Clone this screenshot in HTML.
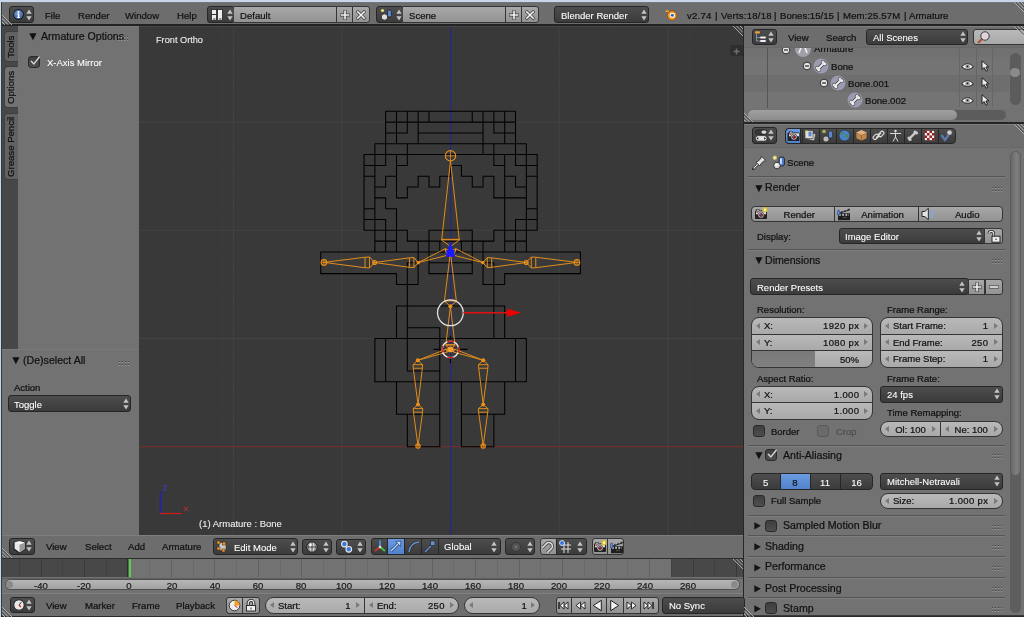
<!DOCTYPE html><html><head><meta charset="utf-8"><style>
*{margin:0;padding:0;box-sizing:border-box}
html,body{width:1024px;height:617px;overflow:hidden;background:#c7d6ea}
body{position:relative;font-family:"Liberation Sans",sans-serif}
.a{position:absolute}
.t{white-space:nowrap;line-height:1;will-change:transform;-webkit-text-stroke:0.22px}
</style></head><body><div class="a " style="left:1px;top:2px;width:1023px;height:615px;background:#3a3a3a"></div>
<div class="a " style="left:2px;top:2px;width:1022px;height:23px;background:#6d6d6d;border-top:1px solid #767676"></div>
<div class="a " style="left:2px;top:24.4px;width:1022px;height:1.5px;background:#222222"></div>
<div class="a " style="left:2px;top:26px;width:136.5px;height:509px;background:#727272"></div>
<div class="a " style="left:18px;top:26px;width:120.5px;height:1.2px;background:#7a7a7a"></div>
<div class="a " style="left:2px;top:26px;width:16px;height:323.5px;background:#474747"></div>
<div class="a " style="left:138.5px;top:26px;width:604.5px;height:509px;background:#393939"></div>
<div class="a " style="left:743px;top:26px;width:1px;height:591px;background:#262626"></div>
<div class="a " style="left:744px;top:26px;width:280px;height:98px;background:#727272"></div>
<div class="a " style="left:744px;top:26px;width:280px;height:21px;background:#6d6d6d"></div>
<div class="a " style="left:744px;top:124px;width:280px;height:491px;background:#727272"></div>
<div class="a " style="left:744px;top:124px;width:280px;height:22.5px;background:#6d6d6d"></div>
<div class="a " style="left:2px;top:535px;width:741px;height:23px;background:#6d6d6d"></div>
<div class="a " style="left:2px;top:558px;width:741px;height:36px;background:#727272"></div>
<div class="a " style="left:2px;top:594px;width:741px;height:21.5px;background:#6d6d6d"></div>
<div class="a " style="left:1px;top:615.5px;width:1023px;height:1.5px;background:#2a2a2a"></div>
<svg class="a" style="left:1.5px;top:14px" width="11" height="11"><path d="M0 2.3 L8.7 11 M0 5.8 L5.2 11 M0 9.3 L1.7 11" stroke="#4a4a4a" stroke-width="0.9"/><path d="M0 1 L10 11 M0 4.5 L6.5 11 M0 8 L3 11" stroke="#b4b4b4" stroke-width="0.9"/></svg>
<div class="a " style="left:9px;top:6px;width:25px;height:17px;background:linear-gradient(#4d4d4d,#3b3b3b);border:1px solid #262626;border-radius:3px"></div>
<svg class="a" style="left:13px;top:9px" width="11" height="11"><defs><radialGradient id="ig" cx="0.45" cy="0.4" r="0.6"><stop offset="0" stop-color="#7a9ad0"/><stop offset="1" stop-color="#3a5c9a"/></radialGradient></defs><circle cx="5.5" cy="5.5" r="5" fill="url(#ig)" stroke="#151515" stroke-width="1"/><circle cx="5.5" cy="3" r="1" fill="#fff"/><path d="M4.3 4.6 H6.3 V8.2 H7 V9 H4 V8.2 H4.8 V5.4 H4.3Z" fill="#fff"/></svg>
<svg class="a" style="left:25.5px;top:8.5px" width="6" height="12"><path d="M3 0.5 L5.7 4.8 L0.3 4.8Z M3 11.5 L5.7 7.2 L0.3 7.2Z" fill="#c4c4c4"/></svg>
<div class="a t " style="left:44.5px;top:11.20px;font-size:9.6px;color:#111;">File</div>
<div class="a t " style="left:77.5px;top:11.20px;font-size:9.6px;color:#111;">Render</div>
<div class="a t " style="left:125px;top:11.20px;font-size:9.6px;color:#111;">Window</div>
<div class="a t " style="left:176.5px;top:11.20px;font-size:9.6px;color:#111;">Help</div>
<div class="a " style="left:207px;top:6px;width:28px;height:17px;background:linear-gradient(#4d4d4d,#3b3b3b);border:1px solid #262626;border-radius:3px"></div>
<svg class="a" style="left:211px;top:9px" width="12" height="12"><rect x="0.5" y="0.5" width="5" height="11" fill="#eee" stroke="#222" stroke-width="0.8"/><rect x="6.5" y="0.5" width="5" height="11" fill="#eee" stroke="#222" stroke-width="0.8"/><path d="M1 5.5H5M2 10H4.5M8 10H10.5" stroke="#333"/></svg>
<svg class="a" style="left:226.5px;top:8.5px" width="6" height="12"><path d="M3 0.5 L5.7 4.8 L0.3 4.8Z M3 11.5 L5.7 7.2 L0.3 7.2Z" fill="#c4c4c4"/></svg>
<div class="a " style="left:234px;top:6px;width:103px;height:17px;background:linear-gradient(#a8a8a8,#929292);border:1px solid #353535;border-left:none;border-radius:0"></div>
<div class="a t " style="left:240px;top:11.30px;font-size:9.6px;color:#111;">Default</div>
<div class="a " style="left:336px;top:6px;width:17px;height:17px;background:linear-gradient(#a8a8a8,#929292);border:1px solid #353535;border-radius:0"></div>
<div class="a " style="left:352px;top:6px;width:18px;height:17px;background:linear-gradient(#a8a8a8,#929292);border:1px solid #353535;border-radius:0 3px 3px 0"></div>
<svg class="a" style="left:339px;top:9px" width="12" height="12"><path d="M6 1V11M1 6H11" stroke="#3a3a3a" stroke-width="3"/><path d="M6 1.6V10.4M1.6 6H10.4" stroke="#f4f4f4" stroke-width="1.6"/></svg>
<svg class="a" style="left:355px;top:9px" width="12" height="12"><path d="M1.8 1.8L10.2 10.2M10.2 1.8L1.8 10.2" stroke="#3a3a3a" stroke-width="3"/><path d="M2.2 2.2L9.8 9.8M9.8 2.2L2.2 9.8" stroke="#f4f4f4" stroke-width="1.6"/></svg>
<div class="a " style="left:376px;top:6px;width:28px;height:17px;background:linear-gradient(#4d4d4d,#3b3b3b);border:1px solid #262626;border-radius:3px"></div>
<svg class="a" style="left:380px;top:8px" width="13" height="13"><circle cx="2.5" cy="2.5" r="1.6" fill="#e8e070"/><circle cx="4.5" cy="9" r="3.2" fill="#ddd" stroke="#222" stroke-width="0.8"/><rect x="7.5" y="2" width="4" height="7" rx="1.5" fill="#5a86d0" stroke="#222" stroke-width="0.8"/></svg>
<svg class="a" style="left:395.5px;top:8.5px" width="6" height="12"><path d="M3 0.5 L5.7 4.8 L0.3 4.8Z M3 11.5 L5.7 7.2 L0.3 7.2Z" fill="#c4c4c4"/></svg>
<div class="a " style="left:403px;top:6px;width:103px;height:17px;background:linear-gradient(#a8a8a8,#929292);border:1px solid #353535;border-left:none;border-radius:0"></div>
<div class="a t " style="left:409px;top:11.30px;font-size:9.6px;color:#111;">Scene</div>
<div class="a " style="left:505px;top:6px;width:17px;height:17px;background:linear-gradient(#a8a8a8,#929292);border:1px solid #353535;border-radius:0"></div>
<div class="a " style="left:521px;top:6px;width:18px;height:17px;background:linear-gradient(#a8a8a8,#929292);border:1px solid #353535;border-radius:0 3px 3px 0"></div>
<svg class="a" style="left:508px;top:9px" width="12" height="12"><path d="M6 1V11M1 6H11" stroke="#3a3a3a" stroke-width="3"/><path d="M6 1.6V10.4M1.6 6H10.4" stroke="#f4f4f4" stroke-width="1.6"/></svg>
<svg class="a" style="left:524px;top:9px" width="12" height="12"><path d="M1.8 1.8L10.2 10.2M10.2 1.8L1.8 10.2" stroke="#3a3a3a" stroke-width="3"/><path d="M2.2 2.2L9.8 9.8M9.8 2.2L2.2 9.8" stroke="#f4f4f4" stroke-width="1.6"/></svg>
<div class="a " style="left:554px;top:6px;width:95px;height:17px;background:linear-gradient(#4d4d4d,#3b3b3b);border:1px solid #262626;border-radius:3px"></div>
<div class="a t " style="left:561px;top:10.55px;font-size:9.5px;color:#fff;-webkit-text-stroke:0.08px;">Blender Render</div>
<svg class="a" style="left:640.5px;top:8.5px" width="6" height="12"><path d="M3 0.5 L5.7 4.8 L0.3 4.8Z M3 11.5 L5.7 7.2 L0.3 7.2Z" fill="#c4c4c4"/></svg>
<svg class="a" style="left:664px;top:8px" width="14" height="13"><path d="M1 4 L6 4 L3 1.5 Z" fill="#f0a020"/><circle cx="8" cy="7.5" r="4.8" fill="#f09020" stroke="#7a4010" stroke-width="0.6"/><circle cx="8.3" cy="7.3" r="2.6" fill="#fff"/><circle cx="8.3" cy="7.3" r="1.5" fill="#2a5fa8"/></svg>
<div class="a t " style="left:687.3px;top:10.80px;font-size:9.6px;color:#111;letter-spacing:0.2px">v2.74</div>
<div class="a t " style="left:715.3px;top:10.80px;font-size:9.6px;color:#111;letter-spacing:0px">|</div>
<div class="a t " style="left:720.5px;top:10.80px;font-size:9.6px;color:#111;letter-spacing:0.2px">Verts:18/18</div>
<div class="a t " style="left:774.4px;top:10.80px;font-size:9.6px;color:#111;letter-spacing:0px">|</div>
<div class="a t " style="left:779.9px;top:10.80px;font-size:9.6px;color:#111;letter-spacing:0.0px">Bones:15/15</div>
<div class="a t " style="left:837.4px;top:10.80px;font-size:9.6px;color:#111;letter-spacing:0px">|</div>
<div class="a t " style="left:842.8px;top:10.80px;font-size:9.6px;color:#111;letter-spacing:0.14px">Mem:25.57M</div>
<div class="a t " style="left:903.5px;top:10.80px;font-size:9.6px;color:#111;letter-spacing:0px">|</div>
<div class="a t " style="left:909px;top:10.80px;font-size:9.6px;color:#111;letter-spacing:0px">Armature</div>
<svg class="a" style="left:1013px;top:2px" width="11" height="11"><path d="M2.3 0 L11 8.7 M5.8 0 L11 5.2 M9.3 0 L11 1.7" stroke="#4a4a4a" stroke-width="0.9"/><path d="M1 0 L11 10 M4.5 0 L11 6.5 M8 0 L11 3" stroke="#b4b4b4" stroke-width="0.9"/></svg>
<div class="a " style="left:3.8px;top:31px;width:14.5px;height:31px;background:#626262;border-radius:4px 0 0 4px;border:1px solid #3e3e3e;border-right:none"></div>
<div class="a t" style="left:6px;top:31px;width:10px;height:31px;display:flex;align-items:center;justify-content:center;font-size:9.6px;color:#111;writing-mode:vertical-rl;transform:rotate(180deg)">Tools</div>
<div class="a " style="left:3.8px;top:66px;width:14.5px;height:42px;background:#727272;border-radius:4px 0 0 4px;border:1px solid #3e3e3e;border-right:none"></div>
<div class="a t" style="left:6px;top:66px;width:10px;height:42px;display:flex;align-items:center;justify-content:center;font-size:9.6px;color:#111;writing-mode:vertical-rl;transform:rotate(180deg)">Options</div>
<div class="a " style="left:3.8px;top:113px;width:14.5px;height:67px;background:#626262;border-radius:4px 0 0 4px;border:1px solid #3e3e3e;border-right:none"></div>
<div class="a t" style="left:6px;top:113px;width:10px;height:67px;display:flex;align-items:center;justify-content:center;font-size:9.6px;color:#111;writing-mode:vertical-rl;transform:rotate(180deg)">Grease Pencil</div>
<svg class="a" style="left:29.0px;top:32.7px" width="8" height="8"><path d="M0.3 0.3 L7.5 0.3 L3.9 7.3Z" fill="#111"/></svg>
<div class="a t " style="left:40.5px;top:30.50px;font-size:10.6px;color:#111;">Armature Options</div>
<svg class="a" style="left:118px;top:35px" width="10" height="6"><g fill="#4a4a4a"><rect x="0" y="1" width="1.2" height="1"/><rect x="3" y="1" width="1.2" height="1"/><rect x="6" y="1" width="1.2" height="1"/><rect x="9" y="1" width="1" height="1"/><rect x="0" y="4" width="1.2" height="1"/><rect x="3" y="4" width="1.2" height="1"/><rect x="6" y="4" width="1.2" height="1"/><rect x="9" y="4" width="1" height="1"/></g><g fill="#9a9a9a"><rect x="0" y="2" width="1.2" height="1"/><rect x="3" y="2" width="1.2" height="1"/><rect x="6" y="2" width="1.2" height="1"/><rect x="9" y="2" width="1" height="1"/><rect x="0" y="5" width="1.2" height="1"/><rect x="3" y="5" width="1.2" height="1"/><rect x="6" y="5" width="1.2" height="1"/><rect x="9" y="5" width="1" height="1"/></g></svg>
<div class="a " style="left:28.3px;top:55.8px;width:12px;height:12px;background:linear-gradient(#3e3e3e,#4e4e4e);border:1px solid #2a2a2a;border-radius:3px"></div>
<svg class="a" style="left:29.3px;top:54.8px" width="12" height="12"><path d="M2.3 6.3 L4.9 8.9 L10.2 2.2" stroke="#d8d8d8" stroke-width="1.4" fill="none" stroke-linecap="round" stroke-linejoin="round"/></svg>
<div class="a t " style="left:47px;top:57.80px;font-size:9.5px;color:#fff;-webkit-text-stroke:0.08px;">X-Axis Mirror</div>
<div class="a " style="left:2px;top:349.3px;width:137px;height:1px;background:#7a7a7a"></div>
<div class="a " style="left:2px;top:350.3px;width:137px;height:184.7px;background:#727272"></div>
<svg class="a" style="left:12.0px;top:357.2px" width="8" height="8"><path d="M0.3 0.3 L7.5 0.3 L3.9 7.3Z" fill="#111"/></svg>
<div class="a t " style="left:22.5px;top:355.00px;font-size:10.6px;color:#111;">(De)select All</div>
<svg class="a" style="left:119px;top:360px" width="10" height="6"><g fill="#4a4a4a"><rect x="0" y="1" width="1.2" height="1"/><rect x="3" y="1" width="1.2" height="1"/><rect x="6" y="1" width="1.2" height="1"/><rect x="9" y="1" width="1" height="1"/><rect x="0" y="4" width="1.2" height="1"/><rect x="3" y="4" width="1.2" height="1"/><rect x="6" y="4" width="1.2" height="1"/><rect x="9" y="4" width="1" height="1"/></g><g fill="#9a9a9a"><rect x="0" y="2" width="1.2" height="1"/><rect x="3" y="2" width="1.2" height="1"/><rect x="6" y="2" width="1.2" height="1"/><rect x="9" y="2" width="1" height="1"/><rect x="0" y="5" width="1.2" height="1"/><rect x="3" y="5" width="1.2" height="1"/><rect x="6" y="5" width="1.2" height="1"/><rect x="9" y="5" width="1" height="1"/></g></svg>
<div class="a t " style="left:13.8px;top:382.80px;font-size:9.5px;color:#111;">Action</div>
<div class="a " style="left:8px;top:395px;width:123px;height:17px;background:linear-gradient(#4d4d4d,#3b3b3b);border:1px solid #262626;border-radius:3px"></div>
<div class="a t " style="left:14px;top:399.55px;font-size:9.5px;color:#fff;-webkit-text-stroke:0.08px;">Toggle</div>
<svg class="a" style="left:122.5px;top:397.5px" width="6" height="12"><path d="M3 0.5 L5.7 4.8 L0.3 4.8Z M3 11.5 L5.7 7.2 L0.3 7.2Z" fill="#c4c4c4"/></svg>
<svg class="a" style="left:139px;top:26px" width="604" height="509" viewBox="139 26 604 509">
<line x1="135.66" y1="26" x2="135.66" y2="535" stroke="#3c3c3c" stroke-width="1"/>
<line x1="146.52" y1="26" x2="146.52" y2="535" stroke="#3c3c3c" stroke-width="1"/>
<line x1="157.38" y1="26" x2="157.38" y2="535" stroke="#3c3c3c" stroke-width="1"/>
<line x1="168.24" y1="26" x2="168.24" y2="535" stroke="#3c3c3c" stroke-width="1"/>
<line x1="179.10" y1="26" x2="179.10" y2="535" stroke="#3c3c3c" stroke-width="1"/>
<line x1="189.96" y1="26" x2="189.96" y2="535" stroke="#3c3c3c" stroke-width="1"/>
<line x1="200.82" y1="26" x2="200.82" y2="535" stroke="#3c3c3c" stroke-width="1"/>
<line x1="211.68" y1="26" x2="211.68" y2="535" stroke="#3c3c3c" stroke-width="1"/>
<line x1="222.54" y1="26" x2="222.54" y2="535" stroke="#3c3c3c" stroke-width="1"/>
<line x1="233.40" y1="26" x2="233.40" y2="535" stroke="#434343" stroke-width="1"/>
<line x1="244.26" y1="26" x2="244.26" y2="535" stroke="#3c3c3c" stroke-width="1"/>
<line x1="255.12" y1="26" x2="255.12" y2="535" stroke="#3c3c3c" stroke-width="1"/>
<line x1="265.98" y1="26" x2="265.98" y2="535" stroke="#3c3c3c" stroke-width="1"/>
<line x1="276.84" y1="26" x2="276.84" y2="535" stroke="#3c3c3c" stroke-width="1"/>
<line x1="287.70" y1="26" x2="287.70" y2="535" stroke="#3c3c3c" stroke-width="1"/>
<line x1="298.56" y1="26" x2="298.56" y2="535" stroke="#3c3c3c" stroke-width="1"/>
<line x1="309.42" y1="26" x2="309.42" y2="535" stroke="#3c3c3c" stroke-width="1"/>
<line x1="320.28" y1="26" x2="320.28" y2="535" stroke="#3c3c3c" stroke-width="1"/>
<line x1="331.14" y1="26" x2="331.14" y2="535" stroke="#3c3c3c" stroke-width="1"/>
<line x1="342.00" y1="26" x2="342.00" y2="535" stroke="#434343" stroke-width="1"/>
<line x1="352.86" y1="26" x2="352.86" y2="535" stroke="#3c3c3c" stroke-width="1"/>
<line x1="363.72" y1="26" x2="363.72" y2="535" stroke="#3c3c3c" stroke-width="1"/>
<line x1="374.58" y1="26" x2="374.58" y2="535" stroke="#3c3c3c" stroke-width="1"/>
<line x1="385.44" y1="26" x2="385.44" y2="535" stroke="#3c3c3c" stroke-width="1"/>
<line x1="396.30" y1="26" x2="396.30" y2="535" stroke="#3c3c3c" stroke-width="1"/>
<line x1="407.16" y1="26" x2="407.16" y2="535" stroke="#3c3c3c" stroke-width="1"/>
<line x1="418.02" y1="26" x2="418.02" y2="535" stroke="#3c3c3c" stroke-width="1"/>
<line x1="428.88" y1="26" x2="428.88" y2="535" stroke="#3c3c3c" stroke-width="1"/>
<line x1="439.74" y1="26" x2="439.74" y2="535" stroke="#3c3c3c" stroke-width="1"/>
<line x1="450.60" y1="26" x2="450.60" y2="535" stroke="#434343" stroke-width="1"/>
<line x1="461.46" y1="26" x2="461.46" y2="535" stroke="#3c3c3c" stroke-width="1"/>
<line x1="472.32" y1="26" x2="472.32" y2="535" stroke="#3c3c3c" stroke-width="1"/>
<line x1="483.18" y1="26" x2="483.18" y2="535" stroke="#3c3c3c" stroke-width="1"/>
<line x1="494.04" y1="26" x2="494.04" y2="535" stroke="#3c3c3c" stroke-width="1"/>
<line x1="504.90" y1="26" x2="504.90" y2="535" stroke="#3c3c3c" stroke-width="1"/>
<line x1="515.76" y1="26" x2="515.76" y2="535" stroke="#3c3c3c" stroke-width="1"/>
<line x1="526.62" y1="26" x2="526.62" y2="535" stroke="#3c3c3c" stroke-width="1"/>
<line x1="537.48" y1="26" x2="537.48" y2="535" stroke="#3c3c3c" stroke-width="1"/>
<line x1="548.34" y1="26" x2="548.34" y2="535" stroke="#3c3c3c" stroke-width="1"/>
<line x1="559.20" y1="26" x2="559.20" y2="535" stroke="#434343" stroke-width="1"/>
<line x1="570.06" y1="26" x2="570.06" y2="535" stroke="#3c3c3c" stroke-width="1"/>
<line x1="580.92" y1="26" x2="580.92" y2="535" stroke="#3c3c3c" stroke-width="1"/>
<line x1="591.78" y1="26" x2="591.78" y2="535" stroke="#3c3c3c" stroke-width="1"/>
<line x1="602.64" y1="26" x2="602.64" y2="535" stroke="#3c3c3c" stroke-width="1"/>
<line x1="613.50" y1="26" x2="613.50" y2="535" stroke="#3c3c3c" stroke-width="1"/>
<line x1="624.36" y1="26" x2="624.36" y2="535" stroke="#3c3c3c" stroke-width="1"/>
<line x1="635.22" y1="26" x2="635.22" y2="535" stroke="#3c3c3c" stroke-width="1"/>
<line x1="646.08" y1="26" x2="646.08" y2="535" stroke="#3c3c3c" stroke-width="1"/>
<line x1="656.94" y1="26" x2="656.94" y2="535" stroke="#3c3c3c" stroke-width="1"/>
<line x1="667.80" y1="26" x2="667.80" y2="535" stroke="#434343" stroke-width="1"/>
<line x1="678.66" y1="26" x2="678.66" y2="535" stroke="#3c3c3c" stroke-width="1"/>
<line x1="689.52" y1="26" x2="689.52" y2="535" stroke="#3c3c3c" stroke-width="1"/>
<line x1="700.38" y1="26" x2="700.38" y2="535" stroke="#3c3c3c" stroke-width="1"/>
<line x1="711.24" y1="26" x2="711.24" y2="535" stroke="#3c3c3c" stroke-width="1"/>
<line x1="722.10" y1="26" x2="722.10" y2="535" stroke="#3c3c3c" stroke-width="1"/>
<line x1="732.96" y1="26" x2="732.96" y2="535" stroke="#3c3c3c" stroke-width="1"/>
<line x1="743.82" y1="26" x2="743.82" y2="535" stroke="#3c3c3c" stroke-width="1"/>
<line x1="754.68" y1="26" x2="754.68" y2="535" stroke="#3c3c3c" stroke-width="1"/>
<line x1="139" y1="24.72" x2="743" y2="24.72" stroke="#3b3b3b" stroke-width="1"/>
<line x1="139" y1="35.54" x2="743" y2="35.54" stroke="#3b3b3b" stroke-width="1"/>
<line x1="139" y1="46.36" x2="743" y2="46.36" stroke="#3b3b3b" stroke-width="1"/>
<line x1="139" y1="57.18" x2="743" y2="57.18" stroke="#3b3b3b" stroke-width="1"/>
<line x1="139" y1="68.00" x2="743" y2="68.00" stroke="#3b3b3b" stroke-width="1"/>
<line x1="139" y1="78.82" x2="743" y2="78.82" stroke="#3b3b3b" stroke-width="1"/>
<line x1="139" y1="89.64" x2="743" y2="89.64" stroke="#3b3b3b" stroke-width="1"/>
<line x1="139" y1="100.46" x2="743" y2="100.46" stroke="#3b3b3b" stroke-width="1"/>
<line x1="139" y1="111.28" x2="743" y2="111.28" stroke="#3b3b3b" stroke-width="1"/>
<line x1="139" y1="122.10" x2="743" y2="122.10" stroke="#434343" stroke-width="1"/>
<line x1="139" y1="132.92" x2="743" y2="132.92" stroke="#3b3b3b" stroke-width="1"/>
<line x1="139" y1="143.74" x2="743" y2="143.74" stroke="#3b3b3b" stroke-width="1"/>
<line x1="139" y1="154.56" x2="743" y2="154.56" stroke="#3b3b3b" stroke-width="1"/>
<line x1="139" y1="165.38" x2="743" y2="165.38" stroke="#3b3b3b" stroke-width="1"/>
<line x1="139" y1="176.20" x2="743" y2="176.20" stroke="#3b3b3b" stroke-width="1"/>
<line x1="139" y1="187.02" x2="743" y2="187.02" stroke="#3b3b3b" stroke-width="1"/>
<line x1="139" y1="197.84" x2="743" y2="197.84" stroke="#3b3b3b" stroke-width="1"/>
<line x1="139" y1="208.66" x2="743" y2="208.66" stroke="#3b3b3b" stroke-width="1"/>
<line x1="139" y1="219.48" x2="743" y2="219.48" stroke="#3b3b3b" stroke-width="1"/>
<line x1="139" y1="230.30" x2="743" y2="230.30" stroke="#434343" stroke-width="1"/>
<line x1="139" y1="241.12" x2="743" y2="241.12" stroke="#3b3b3b" stroke-width="1"/>
<line x1="139" y1="251.94" x2="743" y2="251.94" stroke="#3b3b3b" stroke-width="1"/>
<line x1="139" y1="262.76" x2="743" y2="262.76" stroke="#3b3b3b" stroke-width="1"/>
<line x1="139" y1="273.58" x2="743" y2="273.58" stroke="#3b3b3b" stroke-width="1"/>
<line x1="139" y1="284.40" x2="743" y2="284.40" stroke="#3b3b3b" stroke-width="1"/>
<line x1="139" y1="295.22" x2="743" y2="295.22" stroke="#3b3b3b" stroke-width="1"/>
<line x1="139" y1="306.04" x2="743" y2="306.04" stroke="#3b3b3b" stroke-width="1"/>
<line x1="139" y1="316.86" x2="743" y2="316.86" stroke="#3b3b3b" stroke-width="1"/>
<line x1="139" y1="327.68" x2="743" y2="327.68" stroke="#3b3b3b" stroke-width="1"/>
<line x1="139" y1="338.50" x2="743" y2="338.50" stroke="#434343" stroke-width="1"/>
<line x1="139" y1="349.32" x2="743" y2="349.32" stroke="#3b3b3b" stroke-width="1"/>
<line x1="139" y1="360.14" x2="743" y2="360.14" stroke="#3b3b3b" stroke-width="1"/>
<line x1="139" y1="370.96" x2="743" y2="370.96" stroke="#3b3b3b" stroke-width="1"/>
<line x1="139" y1="381.78" x2="743" y2="381.78" stroke="#3b3b3b" stroke-width="1"/>
<line x1="139" y1="392.60" x2="743" y2="392.60" stroke="#3b3b3b" stroke-width="1"/>
<line x1="139" y1="403.42" x2="743" y2="403.42" stroke="#3b3b3b" stroke-width="1"/>
<line x1="139" y1="414.24" x2="743" y2="414.24" stroke="#3b3b3b" stroke-width="1"/>
<line x1="139" y1="425.06" x2="743" y2="425.06" stroke="#3b3b3b" stroke-width="1"/>
<line x1="139" y1="435.88" x2="743" y2="435.88" stroke="#3b3b3b" stroke-width="1"/>
<line x1="139" y1="446.70" x2="743" y2="446.70" stroke="#434343" stroke-width="1"/>
<line x1="139" y1="457.52" x2="743" y2="457.52" stroke="#3b3b3b" stroke-width="1"/>
<line x1="139" y1="468.34" x2="743" y2="468.34" stroke="#3b3b3b" stroke-width="1"/>
<line x1="139" y1="479.16" x2="743" y2="479.16" stroke="#3b3b3b" stroke-width="1"/>
<line x1="139" y1="489.98" x2="743" y2="489.98" stroke="#3b3b3b" stroke-width="1"/>
<line x1="139" y1="500.80" x2="743" y2="500.80" stroke="#3b3b3b" stroke-width="1"/>
<line x1="139" y1="511.62" x2="743" y2="511.62" stroke="#3b3b3b" stroke-width="1"/>
<line x1="139" y1="522.44" x2="743" y2="522.44" stroke="#3b3b3b" stroke-width="1"/>
<line x1="139" y1="533.26" x2="743" y2="533.26" stroke="#3b3b3b" stroke-width="1"/>
<line x1="139" y1="544.08" x2="743" y2="544.08" stroke="#3b3b3b" stroke-width="1"/>
<line x1="139" y1="446.7" x2="743" y2="446.7" stroke="#7a2a2a" stroke-width="1"/>
<line x1="450.6" y1="26" x2="450.6" y2="535" stroke="#26268a" stroke-width="1.2"/>
<path d="M385.68 111.30H515.52M385.68 122.12H515.52M385.68 132.94H407.32M418.14 132.94H483.06M493.88 132.94H515.52M374.86 143.76H526.34M364.04 154.58H537.16M364.04 165.40H385.68M396.50 165.40H407.32M450.60 165.40H461.42M493.88 165.40H504.70M515.52 165.40H537.16M364.04 176.22H374.86M385.68 176.22H396.50M418.14 176.22H428.96M439.78 176.22H450.60M461.42 176.22H472.24M483.06 176.22H493.88M504.70 176.22H515.52M526.34 176.22H537.16M374.86 187.04H385.68M407.32 187.04H418.14M428.96 187.04H439.78M472.24 187.04H483.06M515.52 187.04H526.34M374.86 197.86H385.68M396.50 197.86H407.32M493.88 197.86H526.34M364.04 208.68H374.86M385.68 208.68H396.50M526.34 208.68H537.16M364.04 219.50H385.68M515.52 219.50H537.16M364.04 230.32H407.32M428.96 230.32H472.24M493.88 230.32H537.16M374.86 241.14H396.50M407.32 241.14H493.88M504.70 241.14H526.34M320.76 251.96H580.44M407.32 262.78H418.14M428.96 262.78H472.24M483.06 262.78H493.88M320.76 273.60H396.50M428.96 273.60H472.24M504.70 273.60H580.44M396.50 284.42H418.14M483.06 284.42H504.70M396.50 306.06H504.70M407.32 327.70H439.78M374.86 338.52H526.34M407.32 370.98H439.78M374.86 381.80H526.34M396.50 414.26H439.78M461.42 414.26H504.70M407.32 446.72H439.78M461.42 446.72H493.88M320.76 251.96V273.60M364.04 154.58V230.32M374.86 143.76V251.96M374.86 338.52V381.80M385.68 111.30V165.40M385.68 176.22V187.04M385.68 197.86V208.68M385.68 219.50V251.96M385.68 338.52V381.80M396.50 111.30V143.76M396.50 154.58V197.86M396.50 208.68V251.96M396.50 273.60V284.42M396.50 306.06V338.52M396.50 381.80V414.26M407.32 111.30V132.94M407.32 143.76V165.40M407.32 187.04V197.86M407.32 230.32V241.14M407.32 262.78V370.98M407.32 414.26V446.72M418.14 111.30V143.76M418.14 176.22V187.04M418.14 241.14V284.42M428.96 111.30V122.12M428.96 176.22V187.04M428.96 230.32V273.60M439.78 176.22V187.04M439.78 241.14V251.96M439.78 327.70V446.72M450.60 165.40V176.22M461.42 165.40V176.22M461.42 241.14V251.96M461.42 381.80V446.72M472.24 111.30V122.12M472.24 176.22V187.04M472.24 230.32V273.60M483.06 111.30V154.58M483.06 176.22V187.04M483.06 241.14V284.42M493.88 111.30V132.94M493.88 143.76V165.40M493.88 176.22V197.86M493.88 230.32V241.14M493.88 262.78V338.52M493.88 414.26V446.72M504.70 111.30V143.76M504.70 154.58V251.96M504.70 273.60V284.42M504.70 306.06V338.52M504.70 381.80V414.26M515.52 111.30V165.40M515.52 176.22V187.04M515.52 219.50V251.96M515.52 338.52V381.80M526.34 143.76V251.96M526.34 338.52V381.80M537.16 154.58V230.32M580.44 251.96V273.60" stroke="#000000" stroke-width="1.05" fill="none" stroke-linecap="square"/><path d="M450.50 246.50L459.70 239.82L459.24 239.32L450.50 160.80L441.76 239.32L441.30 239.82Z M459.70 239.82L441.30 239.82 M459.24 239.32L441.76 239.32" stroke="#e8901a" stroke-width="0.95" fill="none" stroke-linejoin="round"/><path d="M449.50 250.80L445.11 248.61L444.89 248.89L418.30 262.60L447.31 255.28L447.65 255.35Z M445.11 248.61L447.65 255.35 M444.89 248.89L447.31 255.28" stroke="#e8901a" stroke-width="0.95" fill="none" stroke-linejoin="round"/><path d="M418.30 262.60L413.94 257.59L409.44 257.83L374.60 262.50L409.42 267.33L413.92 267.59Z M413.94 257.59L413.92 267.59 M409.44 257.83L409.42 267.33" stroke="#e8901a" stroke-width="0.95" fill="none" stroke-linejoin="round"/><path d="M374.60 262.50L369.54 256.99L365.04 257.26L323.90 262.40L365.02 267.71L369.52 267.99Z M369.54 256.99L369.52 267.99 M365.04 257.26L365.02 267.71" stroke="#e8901a" stroke-width="0.95" fill="none" stroke-linejoin="round"/><path d="M451.50 250.80L453.37 255.35L453.72 255.29L482.90 262.60L456.12 248.88L455.91 248.61Z M453.37 255.35L455.91 248.61 M453.72 255.29L456.12 248.88" stroke="#e8901a" stroke-width="0.95" fill="none" stroke-linejoin="round"/><path d="M482.90 262.60L487.24 267.59L491.74 267.33L526.20 262.50L491.72 257.83L487.22 257.59Z M487.24 267.59L487.22 257.59 M491.74 267.33L491.72 257.83" stroke="#e8901a" stroke-width="0.95" fill="none" stroke-linejoin="round"/><path d="M526.20 262.50L531.29 267.99L535.79 267.71L577.00 262.40L535.77 257.26L531.27 256.99Z M531.29 267.99L531.27 256.99 M535.79 267.71L535.77 257.26" stroke="#e8901a" stroke-width="0.95" fill="none" stroke-linejoin="round"/><path d="M450.40 306.30L456.60 300.92L456.29 300.42L450.40 252.50L444.51 300.42L444.20 300.92Z M456.60 300.92L444.20 300.92 M456.29 300.42L444.51 300.42" stroke="#e8901a" stroke-width="0.95" fill="none" stroke-linejoin="round"/><path d="M450.40 349.40L455.20 345.09L454.96 344.59L450.40 306.30L445.84 344.59L445.60 345.09Z M455.20 345.09L445.60 345.09 M454.96 344.59L445.84 344.59" stroke="#e8901a" stroke-width="0.95" fill="none" stroke-linejoin="round"/><path d="M450.40 349.40L446.63 348.97L446.37 349.14L417.80 360.30L447.34 352.03L447.65 352.01Z M446.63 348.97L447.65 352.01 M446.37 349.14L447.34 352.03" stroke="#e8901a" stroke-width="0.95" fill="none" stroke-linejoin="round"/><path d="M417.80 360.30L413.02 364.74L413.28 368.24L418.00 404.50L422.40 368.20L422.62 364.70Z M413.02 364.74L422.62 364.70 M413.28 368.24L422.40 368.20" stroke="#e8901a" stroke-width="0.95" fill="none" stroke-linejoin="round"/><path d="M418.00 404.50L413.20 408.65L413.44 412.15L418.00 446.00L422.56 412.15L422.80 408.65Z M413.20 408.65L422.80 408.65 M413.44 412.15L422.56 412.15" stroke="#e8901a" stroke-width="0.95" fill="none" stroke-linejoin="round"/><path d="M450.40 349.40L453.19 352.01L453.50 352.03L483.30 360.30L454.45 349.14L454.19 348.97Z M453.19 352.01L454.19 348.97 M453.50 352.03L454.45 349.14" stroke="#e8901a" stroke-width="0.95" fill="none" stroke-linejoin="round"/><path d="M483.30 360.30L478.49 364.71L478.72 368.21L483.20 404.50L487.84 368.23L488.09 364.73Z M478.49 364.71L488.09 364.73 M478.72 368.21L487.84 368.23" stroke="#e8901a" stroke-width="0.95" fill="none" stroke-linejoin="round"/><path d="M483.20 404.50L478.40 408.65L478.64 412.15L483.20 446.00L487.76 412.15L488.00 408.65Z M478.40 408.65L488.00 408.65 M478.64 412.15L487.76 412.15" stroke="#e8901a" stroke-width="0.95" fill="none" stroke-linejoin="round"/><circle cx="450.5" cy="155.8" r="5.2" stroke="#e8901a" stroke-width="1.1" fill="none"/><path d="M445.3 155.8H455.7M450.5 150.60000000000002V161.0" stroke="#e8901a" stroke-width="0.8"/><circle cx="323.9" cy="262.4" r="2.8" stroke="#e8901a" stroke-width="1.1" fill="none"/><path d="M321.09999999999997 262.4H326.7M323.9 259.59999999999997V265.2" stroke="#e8901a" stroke-width="0.8"/><circle cx="577.0" cy="262.4" r="2.8" stroke="#e8901a" stroke-width="1.1" fill="none"/><path d="M574.2 262.4H579.8M577.0 259.59999999999997V265.2" stroke="#e8901a" stroke-width="0.8"/><circle cx="418" cy="446" r="2.2" stroke="#e8901a" stroke-width="1.1" fill="none"/><path d="M415.8 446H420.2M418 443.8V448.2" stroke="#e8901a" stroke-width="0.8"/><circle cx="483.2" cy="446" r="2.2" stroke="#e8901a" stroke-width="1.1" fill="none"/><path d="M481.0 446H485.4M483.2 443.8V448.2" stroke="#e8901a" stroke-width="0.8"/><circle cx="374.6" cy="262.5" r="2.0" stroke="#e8901a" stroke-width="1.1" fill="none"/><path d="M372.6 262.5H376.6M374.6 260.5V264.5" stroke="#e8901a" stroke-width="0.8"/><circle cx="526.2" cy="262.5" r="2.0" stroke="#e8901a" stroke-width="1.1" fill="none"/><path d="M524.2 262.5H528.2M526.2 260.5V264.5" stroke="#e8901a" stroke-width="0.8"/><circle cx="418.3" cy="262.6" r="1.8" fill="#e8901a"/><circle cx="482.9" cy="262.6" r="1.8" fill="#e8901a"/><circle cx="417.8" cy="360.3" r="2" fill="#e8901a"/><circle cx="483.3" cy="360.3" r="2" fill="#e8901a"/><circle cx="418" cy="404.5" r="2" fill="#e8901a"/><circle cx="483.2" cy="404.5" r="2" fill="#e8901a"/><circle cx="450.4" cy="306.3" r="2" fill="#e8901a"/><path d="M450.4 241.5 L455 256.5 L445.8 256.5Z" fill="#1a1aff"/><rect x="446.5" y="250" width="8" height="6.5" fill="#1a1aff"/><circle cx="450.4" cy="312.8" r="12.9" stroke="#e0e0e0" stroke-width="1.3" fill="none"/><line x1="463.3" y1="312.8" x2="508" y2="312.8" stroke="#e01010" stroke-width="1.6"/><path d="M507 308.8 L521.5 312.8 L507 316.8Z" fill="#ee0000"/><path d="M433.5 349.4H442M459 349.4H467.5M450.4 336V341M450.4 358V363" stroke="#000" stroke-width="1.1"/><circle cx="450.4" cy="349.4" r="8.3" stroke="#f0f0f0" stroke-width="1.3" fill="none"/><circle cx="450.4" cy="349.4" r="8.3" stroke="#e01818" stroke-width="1.3" fill="none" stroke-dasharray="6.52 6.52" stroke-dashoffset="3.2"/><circle cx="450.4" cy="349.4" r="2.8" fill="#f5a030"/>
</svg>
<div class="a " style="left:138.5px;top:26px;width:604.5px;height:1.2px;background:#474747"></div>
<div class="a t " style="left:155.5px;top:35.80px;font-size:9.2px;color:#f0f0f0;-webkit-text-stroke:0.08px;">Front Ortho</div>
<div class="a t " style="left:198.5px;top:518.80px;font-size:9.5px;color:#f0f0f0;-webkit-text-stroke:0.08px;">(1) Armature : Bone</div>
<svg class="a" style="left:150px;top:480px" width="45" height="40"><line x1="10.5" y1="11.5" x2="10.5" y2="33.5" stroke="#2020c8" stroke-width="1.3"/><line x1="10" y1="33.5" x2="32" y2="33.5" stroke="#c81e1e" stroke-width="1.3"/><path d="M13.3 5.5H16.5L13.3 10H16.5" stroke="#3a3ad8" stroke-width="0.9" fill="none"/><path d="M33.8 26.5L38 31M38 26.5L33.8 31" stroke="#c83030" stroke-width="0.9"/></svg>
<svg class="a" style="left:732px;top:26px" width="11" height="11"><path d="M2.3 0 L11 8.7 M5.8 0 L11 5.2 M9.3 0 L11 1.7" stroke="#4a4a4a" stroke-width="0.9"/><path d="M1 0 L11 10 M4.5 0 L11 6.5 M8 0 L11 3" stroke="#b4b4b4" stroke-width="0.9"/></svg>
<div class="a " style="left:730.2px;top:45px;width:13px;height:11.3px;background:#2e2e2e;border-radius:3px 0 0 3px"></div>
<svg class="a" style="left:732.5px;top:47.5px" width="7" height="7"><path d="M3.5 0.5V6.5M0.5 3.5H6.5" stroke="#6e6e6e" stroke-width="1.5"/></svg>
<div class="a " style="left:2px;top:534.5px;width:741px;height:1px;background:#7e7e7e"></div>
<svg class="a" style="left:1.5px;top:547px" width="11" height="11"><path d="M0 2.3 L8.7 11 M0 5.8 L5.2 11 M0 9.3 L1.7 11" stroke="#4a4a4a" stroke-width="0.9"/><path d="M0 1 L10 11 M0 4.5 L6.5 11 M0 8 L3 11" stroke="#b4b4b4" stroke-width="0.9"/></svg>
<div class="a " style="left:9.3px;top:538px;width:25.5px;height:16.5px;background:linear-gradient(#4d4d4d,#3b3b3b);border:1px solid #262626;border-radius:3px"></div>
<svg class="a" style="left:12.5px;top:540px" width="13" height="14"><path d="M6.5 1 L12 2.6 L12 9 L6.5 13 L1 9 L1 2.6Z" fill="#e8e8e8" stroke="#1a1a1a" stroke-width="1.1"/><path d="M6.5 4.6 L12 2.6 L12 9 L6.5 13Z" fill="#9a9a9a"/><path d="M1 2.6 L6.5 4.6 L12 2.6 L6.5 1Z" fill="#f4f4f4"/></svg>
<svg class="a" style="left:26.299999999999997px;top:540.25px" width="6" height="12"><path d="M3 0.5 L5.7 4.8 L0.3 4.8Z M3 11.5 L5.7 7.2 L0.3 7.2Z" fill="#c4c4c4"/></svg>
<div class="a t " style="left:46.4px;top:542.30px;font-size:9.6px;color:#111;">View</div>
<div class="a t " style="left:84.6px;top:542.30px;font-size:9.6px;color:#111;">Select</div>
<div class="a t " style="left:128px;top:542.30px;font-size:9.6px;color:#111;">Add</div>
<div class="a t " style="left:162px;top:542.30px;font-size:9.6px;color:#111;">Armature</div>
<div class="a " style="left:213px;top:538px;width:85px;height:17px;background:linear-gradient(#4d4d4d,#3b3b3b);border:1px solid #262626;border-radius:3px"></div>
<svg class="a" style="left:216px;top:540px" width="13" height="13"><rect x="3" y="2.5" width="7" height="8" rx="1" fill="#c8c8c8" stroke="#333" stroke-width="0.6"/><g fill="#f09a30" stroke="#3a2000" stroke-width="0.5"><rect x="1" y="1" width="3" height="3"/><rect x="6.5" y="2" width="3" height="3"/><rect x="1" y="7" width="3" height="3"/><rect x="6" y="9" width="3" height="3"/></g></svg>
<div class="a t " style="left:233.5px;top:542.55px;font-size:9.5px;color:#fff;-webkit-text-stroke:0.08px;">Edit Mode</div>
<svg class="a" style="left:289.5px;top:540.5px" width="6" height="12"><path d="M3 0.5 L5.7 4.8 L0.3 4.8Z M3 11.5 L5.7 7.2 L0.3 7.2Z" fill="#c4c4c4"/></svg>
<div class="a " style="left:302.3px;top:538.5px;width:29.3px;height:16px;background:linear-gradient(#4d4d4d,#3b3b3b);border:1px solid #262626;border-radius:3px"></div>
<svg class="a" style="left:306px;top:540.5px" width="12" height="12"><circle cx="6" cy="6" r="5.2" fill="#d6d6d6" stroke="#151515" stroke-width="0.9"/><path d="M6 0.8V11.2M0.8 6H11.2" stroke="#333" stroke-width="0.9"/><path d="M3.3 1.5 Q1.8 6 3.3 10.5 M8.7 1.5 Q10.2 6 8.7 10.5" stroke="#444" stroke-width="0.8" fill="none"/><circle cx="4.5" cy="4" r="1.4" fill="#fff" opacity="0.8"/></svg>
<svg class="a" style="left:323.1px;top:540.5px" width="6" height="12"><path d="M3 0.5 L5.7 4.8 L0.3 4.8Z M3 11.5 L5.7 7.2 L0.3 7.2Z" fill="#c4c4c4"/></svg>
<div class="a " style="left:336px;top:538.5px;width:29.5px;height:16px;background:linear-gradient(#4d4d4d,#3b3b3b);border:1px solid #262626;border-radius:3px"></div>
<svg class="a" style="left:339.5px;top:539.5px" width="13" height="14"><circle cx="4.4" cy="4.1" r="2.8" fill="#3a78e0" stroke="#eaeaea" stroke-width="1.1"/><circle cx="8.8" cy="9.3" r="2.8" fill="#3a78e0" stroke="#eaeaea" stroke-width="1.1"/></svg>
<svg class="a" style="left:357.0px;top:540.5px" width="6" height="12"><path d="M3 0.5 L5.7 4.8 L0.3 4.8Z M3 11.5 L5.7 7.2 L0.3 7.2Z" fill="#c4c4c4"/></svg>
<div class="a " style="left:371px;top:538px;width:130px;height:17px;background:linear-gradient(#4d4d4d,#3b3b3b);border:1px solid #262626;border-radius:3px"></div>
<div class="a " style="left:387px;top:538px;width:17.5px;height:17px;background:linear-gradient(#6a9ae0,#5282cc);border:1px solid #262626"></div>
<div class="a " style="left:404px;top:538px;width:1px;height:17px;background:#262626"></div>
<div class="a " style="left:421px;top:538px;width:1px;height:17px;background:#262626"></div>
<div class="a " style="left:438px;top:538px;width:1px;height:17px;background:#262626"></div>
<svg class="a" style="left:373px;top:539px" width="14" height="15"><path d="M7 8 V1.5" stroke="#4a88e0" stroke-width="2"/><path d="M7 8 L2 12" stroke="#d03030" stroke-width="2"/><path d="M7 8 L12 12" stroke="#40c040" stroke-width="2"/><circle cx="7" cy="8" r="1.3" fill="#ddd"/></svg>
<svg class="a" style="left:389px;top:540px" width="14" height="13"><path d="M2 11 L11 2" stroke="#1e3a6a" stroke-width="2.6"/><path d="M2 11 L10 3" stroke="#bcd6ff" stroke-width="1.4"/><path d="M6.5 1.5 L12 1 L11.5 6.5Z" fill="#bcd6ff" stroke="#1e3a6a" stroke-width="0.7"/></svg>
<svg class="a" style="left:407px;top:540px" width="14" height="13"><path d="M2 12 Q3 3 12 2" stroke="#1e2a3a" stroke-width="2.6" fill="none"/><path d="M2 12 Q3 3 12 2" stroke="#6c90c8" stroke-width="1.4" fill="none"/></svg>
<svg class="a" style="left:423px;top:540px" width="14" height="13"><path d="M2 12 L8 6" stroke="#1e2a3a" stroke-width="2.6"/><path d="M2 12 L8 6" stroke="#6c90c8" stroke-width="1.4"/><rect x="7.5" y="1" width="4.5" height="4.5" fill="#6c90c8" stroke="#1e2a3a" stroke-width="0.7"/></svg>
<div class="a t " style="left:444px;top:542.30px;font-size:9.6px;color:#fff;-webkit-text-stroke:0.08px;">Global</div>
<svg class="a" style="left:491px;top:540.5px" width="6" height="12"><path d="M3 0.5 L5.7 4.8 L0.3 4.8Z M3 11.5 L5.7 7.2 L0.3 7.2Z" fill="#c4c4c4"/></svg>
<div class="a " style="left:505px;top:538px;width:30px;height:17px;background:linear-gradient(#4d4d4d,#3b3b3b);border:1px solid #262626;border-radius:3px"></div>
<svg class="a" style="left:510px;top:541px" width="12" height="12"><circle cx="6" cy="6" r="4.5" fill="#555" stroke="#333" stroke-width="0.8"/><circle cx="6" cy="6" r="2.2" fill="#6a6a6a" stroke="#444" stroke-width="0.6"/></svg>
<svg class="a" style="left:526.5px;top:540.5px" width="6" height="12"><path d="M3 0.5 L5.7 4.8 L0.3 4.8Z M3 11.5 L5.7 7.2 L0.3 7.2Z" fill="#c4c4c4"/></svg>
<div class="a " style="left:540px;top:538px;width:17px;height:17px;background:linear-gradient(#a8a8a8,#929292);border:1px solid #353535;border-radius:3px 0 0 3px"></div>
<svg class="a" style="left:542px;top:540px" width="13" height="13"><g transform="rotate(45 6.5 6.5)"><path d="M3 12 L3 6 A3.5 3.5 0 0 1 10 6 L10 12" stroke="#444" stroke-width="3.2" fill="none"/><path d="M3 12 L3 6 A3.5 3.5 0 0 1 10 6 L10 12" stroke="#d8d8d8" stroke-width="1.6" fill="none"/></g></svg>
<div class="a " style="left:556px;top:538px;width:31px;height:17px;background:linear-gradient(#4d4d4d,#3b3b3b);border:1px solid #262626;border-radius:0 3px 3px 0"></div>
<svg class="a" style="left:558px;top:539px" width="14" height="15"><path d="M3 6H13M3 10H13M6 3V14M10 3V14" stroke="#ddd" stroke-width="1"/><circle cx="4" cy="4" r="2.5" fill="#3a7ae0" stroke="#eee" stroke-width="0.8"/></svg>
<svg class="a" style="left:577px;top:540.5px" width="6" height="12"><path d="M3 0.5 L5.7 4.8 L0.3 4.8Z M3 11.5 L5.7 7.2 L0.3 7.2Z" fill="#c4c4c4"/></svg>
<div class="a " style="left:592px;top:538px;width:16px;height:17px;background:linear-gradient(#a8a8a8,#929292);border:1px solid #353535;border-radius:3px 0 0 3px"></div>
<div class="a " style="left:607px;top:538px;width:17px;height:17px;background:linear-gradient(#a8a8a8,#929292);border:1px solid #353535;border-radius:0 3px 3px 0"></div>
<svg class="a" style="left:593px;top:539.5px" width="15" height="14"><rect x="1" y="3.5" width="12" height="8.5" rx="1" fill="#222"/><rect x="2" y="4.3" width="10" height="3" fill="#dcdcdc"/><rect x="2.5" y="2.5" width="3" height="1.5" fill="#ccc" stroke="#222" stroke-width="0.5"/><rect x="2.5" y="5" width="1.5" height="1" fill="#e03030"/><circle cx="7" cy="8" r="3" fill="#e8e8e8" stroke="#222" stroke-width="0.6"/><circle cx="7" cy="8" r="2" fill="#5a3040"/><circle cx="7.5" cy="8.5" r="1.1" fill="#b02020"/><circle cx="6.3" cy="7.3" r="0.6" fill="#6080c0"/><circle cx="11" cy="2.7" r="2.6" fill="#d8c030"/><circle cx="11" cy="2.7" r="1.2" fill="#fff8c0"/></svg>
<svg class="a" style="left:609.5px;top:539.5px" width="14" height="14"><rect x="1" y="6.2" width="12" height="7" fill="#1e1e1e"/><path d="M2 7.3H12M2 8.3H12" stroke="#eee" stroke-width="0.8" stroke-dasharray="1.8 1.4"/><path d="M1 5.2 L12.5 1.5 L13 3.3 L1.5 7Z" fill="#1e1e1e"/><path d="M2.5 5 L11.8 2.2" stroke="#eee" stroke-width="0.9" stroke-dasharray="1.8 1.4"/><rect x="0.3" y="3.2" width="2.6" height="5" rx="1.2" fill="#5a8ad8" stroke="#1e2e60" stroke-width="0.5"/><path d="M6 11 L8 10 L10 11" stroke="#777" stroke-width="0.6" fill="none"/></svg>
<div class="a " style="left:2px;top:557.8px;width:741px;height:1.4px;background:#2c2c2c"></div>
<div class="a " style="left:2px;top:559.2px;width:741px;height:18.3px;background:#727272"></div>
<div class="a " style="left:2px;top:559.2px;width:125.5px;height:18.3px;background:#484848"></div>
<div class="a " style="left:127px;top:558.8px;width:1px;height:18.7px;background:#2e2e2e"></div>
<div class="a " style="left:671px;top:558.8px;width:72px;height:18.7px;background:#484848"></div>
<div class="a " style="left:18.89px;top:559.2px;width:1px;height:18.3px;background:#414141"></div>
<div class="a " style="left:40.62px;top:559.2px;width:1px;height:18.3px;background:#393939"></div>
<div class="a " style="left:62.35px;top:559.2px;width:1px;height:18.3px;background:#414141"></div>
<div class="a " style="left:84.08px;top:559.2px;width:1px;height:18.3px;background:#393939"></div>
<div class="a " style="left:105.81px;top:559.2px;width:1px;height:18.3px;background:#414141"></div>
<div class="a " style="left:127.54px;top:559.2px;width:1px;height:18.3px;background:#616161"></div>
<div class="a " style="left:149.27px;top:559.2px;width:1px;height:18.3px;background:#6a6a6a"></div>
<div class="a " style="left:171.0px;top:559.2px;width:1px;height:18.3px;background:#616161"></div>
<div class="a " style="left:192.73px;top:559.2px;width:1px;height:18.3px;background:#6a6a6a"></div>
<div class="a " style="left:214.46px;top:559.2px;width:1px;height:18.3px;background:#616161"></div>
<div class="a " style="left:236.19px;top:559.2px;width:1px;height:18.3px;background:#6a6a6a"></div>
<div class="a " style="left:257.92px;top:559.2px;width:1px;height:18.3px;background:#616161"></div>
<div class="a " style="left:279.65px;top:559.2px;width:1px;height:18.3px;background:#6a6a6a"></div>
<div class="a " style="left:301.38px;top:559.2px;width:1px;height:18.3px;background:#616161"></div>
<div class="a " style="left:323.11px;top:559.2px;width:1px;height:18.3px;background:#6a6a6a"></div>
<div class="a " style="left:344.84px;top:559.2px;width:1px;height:18.3px;background:#616161"></div>
<div class="a " style="left:366.57px;top:559.2px;width:1px;height:18.3px;background:#6a6a6a"></div>
<div class="a " style="left:388.3px;top:559.2px;width:1px;height:18.3px;background:#616161"></div>
<div class="a " style="left:410.03px;top:559.2px;width:1px;height:18.3px;background:#6a6a6a"></div>
<div class="a " style="left:431.76px;top:559.2px;width:1px;height:18.3px;background:#616161"></div>
<div class="a " style="left:453.49px;top:559.2px;width:1px;height:18.3px;background:#6a6a6a"></div>
<div class="a " style="left:475.22px;top:559.2px;width:1px;height:18.3px;background:#616161"></div>
<div class="a " style="left:496.95px;top:559.2px;width:1px;height:18.3px;background:#6a6a6a"></div>
<div class="a " style="left:518.68px;top:559.2px;width:1px;height:18.3px;background:#616161"></div>
<div class="a " style="left:540.41px;top:559.2px;width:1px;height:18.3px;background:#6a6a6a"></div>
<div class="a " style="left:562.14px;top:559.2px;width:1px;height:18.3px;background:#616161"></div>
<div class="a " style="left:583.87px;top:559.2px;width:1px;height:18.3px;background:#6a6a6a"></div>
<div class="a " style="left:605.6px;top:559.2px;width:1px;height:18.3px;background:#616161"></div>
<div class="a " style="left:627.33px;top:559.2px;width:1px;height:18.3px;background:#6a6a6a"></div>
<div class="a " style="left:649.06px;top:559.2px;width:1px;height:18.3px;background:#616161"></div>
<div class="a " style="left:670.79px;top:559.2px;width:1px;height:18.3px;background:#414141"></div>
<div class="a " style="left:692.52px;top:559.2px;width:1px;height:18.3px;background:#393939"></div>
<div class="a " style="left:714.25px;top:559.2px;width:1px;height:18.3px;background:#414141"></div>
<div class="a " style="left:735.98px;top:559.2px;width:1px;height:18.3px;background:#393939"></div>
<div class="a " style="left:128.5px;top:559.2px;width:2.5px;height:18.3px;background:#58d048"></div>
<div class="a " style="left:2px;top:577.5px;width:741px;height:1.8px;background:#5e5e5e"></div>
<svg class="a" style="left:732px;top:559px" width="11" height="11"><path d="M2.3 0 L11 8.7 M5.8 0 L11 5.2 M9.3 0 L11 1.7" stroke="#4a4a4a" stroke-width="0.9"/><path d="M1 0 L11 10 M4.5 0 L11 6.5 M8 0 L11 3" stroke="#b4b4b4" stroke-width="0.9"/></svg>
<div class="a " style="left:4.5px;top:579.2px;width:735px;height:10.4px;background:linear-gradient(#b6b6b6,#a2a2a2);border:1px solid #4e4e4e;border-radius:5.5px"></div>
<div class="a" style="left:6px;top:581px;width:7px;height:7px;border-radius:50%;background:#8a8a8a"></div>
<div class="a" style="left:731px;top:581px;width:7px;height:7px;border-radius:50%;background:#8a8a8a"></div>
<div class="a t" style="left:25.60000000000001px;top:581.30px;width:30px;text-align:center;font-size:9.6px;color:#1a1a1a;">-40</div>
<div class="a t" style="left:68.60000000000001px;top:581.30px;width:30px;text-align:center;font-size:9.6px;color:#1a1a1a;">-20</div>
<div class="a t" style="left:113.9px;top:581.30px;width:30px;text-align:center;font-size:9.6px;color:#1a1a1a;">0</div>
<div class="a t" style="left:156.9px;top:581.30px;width:30px;text-align:center;font-size:9.6px;color:#1a1a1a;">20</div>
<div class="a t" style="left:199.9px;top:581.30px;width:30px;text-align:center;font-size:9.6px;color:#1a1a1a;">40</div>
<div class="a t" style="left:242.89999999999998px;top:581.30px;width:30px;text-align:center;font-size:9.6px;color:#1a1a1a;">60</div>
<div class="a t" style="left:285.9px;top:581.30px;width:30px;text-align:center;font-size:9.6px;color:#1a1a1a;">80</div>
<div class="a t" style="left:328.9px;top:581.30px;width:30px;text-align:center;font-size:9.6px;color:#1a1a1a;">100</div>
<div class="a t" style="left:371.9px;top:581.30px;width:30px;text-align:center;font-size:9.6px;color:#1a1a1a;">120</div>
<div class="a t" style="left:414.9px;top:581.30px;width:30px;text-align:center;font-size:9.6px;color:#1a1a1a;">140</div>
<div class="a t" style="left:457.9px;top:581.30px;width:30px;text-align:center;font-size:9.6px;color:#1a1a1a;">160</div>
<div class="a t" style="left:500.9px;top:581.30px;width:30px;text-align:center;font-size:9.6px;color:#1a1a1a;">180</div>
<div class="a t" style="left:543.9px;top:581.30px;width:30px;text-align:center;font-size:9.6px;color:#1a1a1a;">200</div>
<div class="a t" style="left:586.9px;top:581.30px;width:30px;text-align:center;font-size:9.6px;color:#1a1a1a;">220</div>
<div class="a t" style="left:629.9px;top:581.30px;width:30px;text-align:center;font-size:9.6px;color:#1a1a1a;">240</div>
<div class="a t" style="left:672.9px;top:581.30px;width:30px;text-align:center;font-size:9.6px;color:#1a1a1a;">260</div>
<div class="a " style="left:2px;top:593px;width:741px;height:1px;background:#808080"></div>
<svg class="a" style="left:1.5px;top:605.5px" width="11" height="11"><path d="M0 2.3 L8.7 11 M0 5.8 L5.2 11 M0 9.3 L1.7 11" stroke="#4a4a4a" stroke-width="0.9"/><path d="M0 1 L10 11 M0 4.5 L6.5 11 M0 8 L3 11" stroke="#b4b4b4" stroke-width="0.9"/></svg>
<div class="a " style="left:9.6px;top:596.5px;width:25px;height:16.5px;background:linear-gradient(#4d4d4d,#3b3b3b);border:1px solid #262626;border-radius:3px"></div>
<svg class="a" style="left:13px;top:599px" width="12" height="12"><circle cx="6" cy="6" r="5.2" fill="#e8e8e8" stroke="#222" stroke-width="0.9"/><path d="M6 6 L8.5 2.8" stroke="#333" stroke-width="1"/><path d="M6 6 L7.8 8" stroke="#d02020" stroke-width="1.2"/></svg>
<svg class="a" style="left:26.1px;top:598.75px" width="6" height="12"><path d="M3 0.5 L5.7 4.8 L0.3 4.8Z M3 11.5 L5.7 7.2 L0.3 7.2Z" fill="#c4c4c4"/></svg>
<div class="a t " style="left:46.4px;top:601.30px;font-size:9.6px;color:#111;">View</div>
<div class="a t " style="left:84.6px;top:601.30px;font-size:9.6px;color:#111;">Marker</div>
<div class="a t " style="left:131.7px;top:601.30px;font-size:9.6px;color:#111;">Frame</div>
<div class="a t " style="left:176.3px;top:601.30px;font-size:9.6px;color:#111;">Playback</div>
<div class="a " style="left:226px;top:596.5px;width:17px;height:17px;background:linear-gradient(#a8a8a8,#929292);border:1px solid #353535;border-radius:3px 0 0 3px"></div>
<div class="a " style="left:242px;top:596.5px;width:17.5px;height:17px;background:linear-gradient(#a8a8a8,#929292);border:1px solid #353535;border-radius:0 3px 3px 0"></div>
<svg class="a" style="left:228px;top:598.5px" width="13" height="13"><circle cx="6.5" cy="6.5" r="5.3" fill="#eee" stroke="#222" stroke-width="0.9"/><path d="M6.5 6.5 V1.3 A5.2 5.2 0 0 1 11.7 6.5Z" fill="#f0a020"/><path d="M6.5 6.5 L9.5 8.5" stroke="#d02020" stroke-width="1"/></svg>
<svg class="a" style="left:245px;top:598.5px" width="12" height="13"><path d="M3.2 7 V4.2 A2.8 2.8 0 0 1 8.8 4.2 V7" stroke="#222" stroke-width="3" fill="none"/><path d="M3.2 7 V4.2 A2.8 2.8 0 0 1 8.8 4.2 V7" stroke="#eee" stroke-width="1.2" fill="none"/><rect x="1.5" y="6.5" width="9" height="5.5" fill="#eee" stroke="#222" stroke-width="0.9"/><rect x="5.5" y="8.5" width="1" height="2" fill="#333"/></svg>
<div class="a " style="left:264.5px;top:596.5px;width:100px;height:17px;background:linear-gradient(#b9b9b9,#a9a9a9);border:1px solid #353535;border-radius:8.5px;border-radius:8.5px 0 0 8.5px"></div>
<svg class="a" style="left:269.5px;top:602.0px" width="4" height="6"><path d="M4 0 L0 3 L4 6Z" fill="#7a7a7a"/></svg>
<svg class="a" style="left:355.5px;top:602.0px" width="4" height="6"><path d="M0 0 L4 3 L0 6Z" fill="#7a7a7a"/></svg>
<div class="a t " style="left:277.5px;top:600.55px;font-size:9.5px;color:#111;">Start:</div>
<div class="a t" style="left:264.5px;top:600.55px;width:85.85px;text-align:right;font-size:9.5px;color:#111;letter-spacing:0.35px">1</div>
<div class="a " style="left:363.5px;top:596.5px;width:95px;height:17px;background:linear-gradient(#b9b9b9,#a9a9a9);border:1px solid #353535;border-radius:8.5px;border-radius:0 8.5px 8.5px 0"></div>
<svg class="a" style="left:368.5px;top:602.0px" width="4" height="6"><path d="M4 0 L0 3 L4 6Z" fill="#7a7a7a"/></svg>
<svg class="a" style="left:449.5px;top:602.0px" width="4" height="6"><path d="M0 0 L4 3 L0 6Z" fill="#7a7a7a"/></svg>
<div class="a t " style="left:376.5px;top:600.55px;font-size:9.5px;color:#111;">End:</div>
<div class="a t" style="left:363.5px;top:600.55px;width:80.85px;text-align:right;font-size:9.5px;color:#111;letter-spacing:0.35px">250</div>
<div class="a " style="left:464px;top:596.5px;width:76px;height:17px;background:linear-gradient(#b9b9b9,#a9a9a9);border:1px solid #353535;border-radius:8.5px;"></div>
<svg class="a" style="left:469px;top:602.0px" width="4" height="6"><path d="M4 0 L0 3 L4 6Z" fill="#7a7a7a"/></svg>
<svg class="a" style="left:531px;top:602.0px" width="4" height="6"><path d="M0 0 L4 3 L0 6Z" fill="#7a7a7a"/></svg>
<div class="a t " style="left:477px;top:600.55px;font-size:9.5px;color:#111;"></div>
<div class="a t" style="left:464px;top:600.55px;width:63.15px;text-align:right;font-size:9.5px;color:#111;letter-spacing:0.35px">1</div>
<div class="a " style="left:556px;top:596.5px;width:16px;height:17px;background:linear-gradient(#a8a8a8,#929292);border:1px solid #353535;border-radius:3px 0 0 3px"></div>
<div class="a " style="left:571px;top:596.5px;width:19.5px;height:17px;background:linear-gradient(#a8a8a8,#929292);border:1px solid #353535;border-radius:0"></div>
<div class="a " style="left:589.5px;top:596.5px;width:17.5px;height:17px;background:linear-gradient(#a8a8a8,#929292);border:1px solid #353535;border-radius:0"></div>
<div class="a " style="left:606px;top:596.5px;width:18px;height:17px;background:linear-gradient(#a8a8a8,#929292);border:1px solid #353535;border-radius:0"></div>
<div class="a " style="left:623px;top:596.5px;width:18px;height:17px;background:linear-gradient(#a8a8a8,#929292);border:1px solid #353535;border-radius:0"></div>
<div class="a " style="left:640px;top:596.5px;width:18.5px;height:17px;background:linear-gradient(#a8a8a8,#929292);border:1px solid #353535;border-radius:0 3px 3px 0"></div>
<svg class="a" style="left:557.0px;top:598.5px" width="13" height="13"><path d="M3 6.5 L7 3 V10Z M7 6.5 L11 3 V10Z" fill="#f2f2f2" stroke="#1e1e1e" stroke-width="0.9" stroke-linejoin="round"/><path d="M2 3V10" stroke="#1e1e1e" stroke-width="1.5"/></svg>
<svg class="a" style="left:573.75px;top:598.5px" width="13" height="13"><path d="M2 6.5 L6.5 3 V10Z M6.5 6.5 L11 3 V10Z" fill="#f2f2f2" stroke="#1e1e1e" stroke-width="0.9" stroke-linejoin="round"/></svg>
<svg class="a" style="left:591.25px;top:598.5px" width="13" height="13"><path d="M2.3 6.5 L10.3 1.3 V11.7Z" fill="#f2f2f2" stroke="#1e1e1e" stroke-width="1" stroke-linejoin="round"/></svg>
<svg class="a" style="left:608.0px;top:598.5px" width="13" height="13"><path d="M10.7 6.5 L2.7 1.3 V11.7Z" fill="#f2f2f2" stroke="#1e1e1e" stroke-width="1" stroke-linejoin="round"/></svg>
<svg class="a" style="left:625.0px;top:598.5px" width="13" height="13"><path d="M11 6.5 L6.5 3 V10Z M6.5 6.5 L2 3 V10Z" fill="#f2f2f2" stroke="#1e1e1e" stroke-width="0.9" stroke-linejoin="round"/></svg>
<svg class="a" style="left:642.25px;top:598.5px" width="13" height="13"><path d="M10 6.5 L6 3 V10Z M6 6.5 L2 3 V10Z" fill="#f2f2f2" stroke="#1e1e1e" stroke-width="0.9" stroke-linejoin="round"/><path d="M11 3V10" stroke="#1e1e1e" stroke-width="1.5"/></svg>
<div class="a " style="left:662px;top:596.5px;width:83px;height:17px;background:linear-gradient(#4d4d4d,#3b3b3b);border:1px solid #262626;border-radius:3px"></div>
<div class="a t " style="left:669px;top:601.05px;font-size:9.5px;color:#fff;-webkit-text-stroke:0.08px;">No Sync</div>
<div class="a " style="left:744px;top:26px;width:280px;height:1px;background:#7e7e7e"></div>
<div class="a " style="left:751.5px;top:28.5px;width:25px;height:16.5px;background:linear-gradient(#4d4d4d,#3b3b3b);border:1px solid #262626;border-radius:3px"></div>
<svg class="a" style="left:754px;top:30px" width="14" height="14"><rect x="1" y="1.2" width="5" height="2.2" rx="1" fill="#f0a030"/><path d="M2.5 3.5 V11 M2.5 7.5 H6 M2.5 11 H6" stroke="#8aa0c8" stroke-width="0.8" fill="none"/><rect x="6" y="6.4" width="6" height="2.2" rx="1" fill="#eee"/><rect x="6" y="9.9" width="6" height="2.2" rx="1" fill="#eee"/></svg>
<svg class="a" style="left:768.0px;top:30.75px" width="6" height="12"><path d="M3 0.5 L5.7 4.8 L0.3 4.8Z M3 11.5 L5.7 7.2 L0.3 7.2Z" fill="#c4c4c4"/></svg>
<div class="a t " style="left:788px;top:33.30px;font-size:9.6px;color:#111;">View</div>
<div class="a t " style="left:826px;top:33.30px;font-size:9.6px;color:#111;">Search</div>
<div class="a " style="left:866px;top:28.5px;width:102px;height:16.5px;background:linear-gradient(#4d4d4d,#3b3b3b);border:1px solid #262626;border-radius:3px"></div>
<div class="a t " style="left:873px;top:32.80px;font-size:9.5px;color:#fff;-webkit-text-stroke:0.08px;">All Scenes</div>
<svg class="a" style="left:959.5px;top:30.75px" width="6" height="12"><path d="M3 0.5 L5.7 4.8 L0.3 4.8Z M3 11.5 L5.7 7.2 L0.3 7.2Z" fill="#c4c4c4"/></svg>
<div class="a " style="left:972.5px;top:28.5px;width:60px;height:16.5px;background:linear-gradient(#b9b9b9,#a9a9a9);border:1px solid #353535;border-radius:3px"></div>
<svg class="a" style="left:976px;top:29.5px" width="15" height="15"><path d="M2 13 L6 9" stroke="#b05020" stroke-width="2.2"/><circle cx="9" cy="6" r="4.2" fill="#dde" stroke="#333" stroke-width="1"/><circle cx="9" cy="6" r="2.8" fill="#e8d0d0" /></svg>
<svg class="a" style="left:1013px;top:26px" width="11" height="11"><path d="M2.3 0 L11 8.7 M5.8 0 L11 5.2 M9.3 0 L11 1.7" stroke="#4a4a4a" stroke-width="0.9"/><path d="M1 0 L11 10 M4.5 0 L11 6.5 M8 0 L11 3" stroke="#b4b4b4" stroke-width="0.9"/></svg>
<div class="a " style="left:744px;top:47px;width:280px;height:1px;background:#686868"></div>
<div class="a " style="left:744px;top:48px;width:280px;height:9px;background:#717171"></div>
<div class="a " style="left:744px;top:57px;width:265px;height:17.5px;background:#747474"></div>
<div class="a " style="left:744px;top:74.5px;width:265px;height:17px;background:#6e6e6e"></div>
<div class="a " style="left:744px;top:91.5px;width:265px;height:17px;background:#747474"></div>
<div class="a " style="left:767px;top:48px;width:1px;height:60px;background:#555555"></div>
<div class="a " style="left:958.5px;top:48px;width:1px;height:59px;background:#666666"></div>
<div class="a " style="left:975.5px;top:48px;width:1px;height:59px;background:#666666"></div>
<div class="a " style="left:992px;top:48px;width:1px;height:59px;background:#666666"></div>
<div class="a" style="left:744px;top:48px;width:265px;height:10px;overflow:hidden"><svg class="a" style="left:37px;top:-3px" width="10" height="10"><circle cx="5" cy="5" r="3.8" fill="#e6e6e6" stroke="#222" stroke-width="0.9"/><path d="M3 5H7" stroke="#111" stroke-width="1.1"/></svg><div class="a" style="left:51px;top:-7px;width:16px;height:16px;border-radius:50%;background:#a0a0a8"></div><svg class="a" style="left:53px;top:-7px" width="12" height="14"><path d="M6 1 L2 12 M6 1 L10 12" stroke="#eee" stroke-width="1.6" fill="none"/></svg><div class="a t" style="left:69.5px;top:-4px;font-size:9.6px;color:#111">Armature</div></div>
<svg class="a" style="left:801.5px;top:61px" width="10" height="10"><circle cx="5" cy="5" r="3.8" fill="#e6e6e6" stroke="#222" stroke-width="0.9"/><path d="M3 5H7" stroke="#111" stroke-width="1.1"/></svg>
<svg class="a" style="left:813px;top:58px" width="16" height="16"><circle cx="8" cy="8" r="7.5" fill="#9a9ab0"/><path d="M5 11 L11 5" stroke="#333" stroke-width="3.2" stroke-linecap="round"/><circle cx="4.2" cy="10.2" r="1.9" fill="#eee" stroke="#333" stroke-width="0.6"/><circle cx="5.8" cy="11.8" r="1.9" fill="#eee" stroke="#333" stroke-width="0.6"/><circle cx="10.2" cy="4.2" r="1.9" fill="#eee" stroke="#333" stroke-width="0.6"/><circle cx="11.8" cy="5.8" r="1.9" fill="#eee" stroke="#333" stroke-width="0.6"/><path d="M5 11 L11 5" stroke="#eee" stroke-width="2" stroke-linecap="round"/></svg>
<div class="a t " style="left:830.5px;top:61.80px;font-size:9.6px;color:#111;">Bone</div>
<svg class="a" style="left:819px;top:78px" width="10" height="10"><circle cx="5" cy="5" r="3.8" fill="#e6e6e6" stroke="#222" stroke-width="0.9"/><path d="M3 5H7" stroke="#111" stroke-width="1.1"/></svg>
<svg class="a" style="left:830px;top:75px" width="16" height="16"><circle cx="8" cy="8" r="7.5" fill="#9a9ab0"/><path d="M5 11 L11 5" stroke="#333" stroke-width="3.2" stroke-linecap="round"/><circle cx="4.2" cy="10.2" r="1.9" fill="#eee" stroke="#333" stroke-width="0.6"/><circle cx="5.8" cy="11.8" r="1.9" fill="#eee" stroke="#333" stroke-width="0.6"/><circle cx="10.2" cy="4.2" r="1.9" fill="#eee" stroke="#333" stroke-width="0.6"/><circle cx="11.8" cy="5.8" r="1.9" fill="#eee" stroke="#333" stroke-width="0.6"/><path d="M5 11 L11 5" stroke="#eee" stroke-width="2" stroke-linecap="round"/></svg>
<div class="a t " style="left:847.5px;top:78.80px;font-size:9.6px;color:#111;">Bone.001</div>
<svg class="a" style="left:847px;top:92px" width="16" height="16"><circle cx="8" cy="8" r="7.5" fill="#9a9ab0"/><path d="M5 11 L11 5" stroke="#333" stroke-width="3.2" stroke-linecap="round"/><circle cx="4.2" cy="10.2" r="1.9" fill="#eee" stroke="#333" stroke-width="0.6"/><circle cx="5.8" cy="11.8" r="1.9" fill="#eee" stroke="#333" stroke-width="0.6"/><circle cx="10.2" cy="4.2" r="1.9" fill="#eee" stroke="#333" stroke-width="0.6"/><circle cx="11.8" cy="5.8" r="1.9" fill="#eee" stroke="#333" stroke-width="0.6"/><path d="M5 11 L11 5" stroke="#eee" stroke-width="2" stroke-linecap="round"/></svg>
<div class="a t " style="left:864.5px;top:95.80px;font-size:9.6px;color:#111;">Bone.002</div>
<svg class="a" style="left:961.0px;top:61.5px" width="13" height="9"><path d="M0.6 4.8 Q6.5 -1.6 12.4 4.8 Q6.5 10 0.6 4.8Z" fill="#f0f0f0" stroke="#1a1a1a" stroke-width="0.9"/><circle cx="6.5" cy="4.6" r="2.3" fill="#a0a0a0"/><circle cx="6.5" cy="4.3" r="0.9" fill="#111"/></svg>
<svg class="a" style="left:981px;top:60px" width="9" height="12"><path d="M1 0.8 L1 9.5 L3.2 7.6 L5 11.2 L6.6 10.4 L4.9 7 L7.8 6.8Z" fill="#eee" stroke="#111" stroke-width="0.9"/></svg>
<svg class="a" style="left:961.0px;top:78.5px" width="13" height="9"><path d="M0.6 4.8 Q6.5 -1.6 12.4 4.8 Q6.5 10 0.6 4.8Z" fill="#f0f0f0" stroke="#1a1a1a" stroke-width="0.9"/><circle cx="6.5" cy="4.6" r="2.3" fill="#a0a0a0"/><circle cx="6.5" cy="4.3" r="0.9" fill="#111"/></svg>
<svg class="a" style="left:981px;top:77px" width="9" height="12"><path d="M1 0.8 L1 9.5 L3.2 7.6 L5 11.2 L6.6 10.4 L4.9 7 L7.8 6.8Z" fill="#eee" stroke="#111" stroke-width="0.9"/></svg>
<svg class="a" style="left:961.0px;top:95.5px" width="13" height="9"><path d="M0.6 4.8 Q6.5 -1.6 12.4 4.8 Q6.5 10 0.6 4.8Z" fill="#f0f0f0" stroke="#1a1a1a" stroke-width="0.9"/><circle cx="6.5" cy="4.6" r="2.3" fill="#a0a0a0"/><circle cx="6.5" cy="4.3" r="0.9" fill="#111"/></svg>
<svg class="a" style="left:981px;top:94px" width="9" height="12"><path d="M1 0.8 L1 9.5 L3.2 7.6 L5 11.2 L6.6 10.4 L4.9 7 L7.8 6.8Z" fill="#eee" stroke="#111" stroke-width="0.9"/></svg>
<div class="a " style="left:1009.5px;top:52.5px;width:11px;height:52.5px;background:#5c5c5c;border-radius:5.5px"></div>
<div class="a" style="left:1010px;top:68px;width:10px;height:8.5px;border-radius:50%;background:#8a8a8a"></div>
<div class="a " style="left:747.5px;top:109.5px;width:258px;height:10.5px;background:#5c5c5c;border-radius:5.5px"></div>
<div class="a " style="left:747.5px;top:109.5px;width:209px;height:10.5px;background:linear-gradient(#a0a0a0,#8c8c8c);border-radius:5.5px"></div>
<svg class="a" style="left:743.5px;top:112px" width="11" height="11"><path d="M0 2.3 L8.7 11 M0 5.8 L5.2 11 M0 9.3 L1.7 11" stroke="#4a4a4a" stroke-width="0.9"/><path d="M0 1 L10 11 M0 4.5 L6.5 11 M0 8 L3 11" stroke="#b4b4b4" stroke-width="0.9"/></svg>
<div class="a " style="left:744px;top:122.3px;width:280px;height:2.2px;background:#262626"></div>
<div class="a " style="left:744px;top:124px;width:280px;height:1px;background:#7e7e7e"></div>
<div class="a " style="left:751.5px;top:127.2px;width:25.3px;height:16.5px;background:linear-gradient(#4d4d4d,#3b3b3b);border:1px solid #262626;border-radius:3px"></div>
<svg class="a" style="left:754.5px;top:129px" width="13" height="13"><rect x="0.5" y="0.8" width="11.5" height="4.6" rx="2.3" fill="#3a3a3a" stroke="#1a1a1a" stroke-width="0.6"/><rect x="6.5" y="1.4" width="5" height="3.4" rx="1.7" fill="#d8d8d8"/><rect x="0.5" y="6.6" width="11.5" height="5.6" rx="2.8" fill="#e4e4e4" stroke="#1a1a1a" stroke-width="0.7"/><path d="M1.6 9.4 L3.3 8.1 V10.7Z M10.9 9.4 L9.2 8.1 V10.7Z" fill="#111"/></svg>
<svg class="a" style="left:768.3px;top:129.45px" width="6" height="12"><path d="M3 0.5 L5.7 4.8 L0.3 4.8Z M3 11.5 L5.7 7.2 L0.3 7.2Z" fill="#c4c4c4"/></svg>
<div class="a " style="left:784.5px;top:127.5px;width:171px;height:16.5px;background:linear-gradient(#4d4d4d,#3b3b3b);border:1px solid #262626;border-radius:4px"></div>
<div class="a " style="left:784.5px;top:127.5px;width:16.5px;height:16.5px;background:linear-gradient(#6a9ae0,#5282cc);border:1px solid #262626;border-radius:4px 0 0 4px"></div>
<div class="a " style="left:801.53px;top:127.5px;width:1.2px;height:16.5px;background:#262626"></div>
<div class="a " style="left:818.56px;top:127.5px;width:1.2px;height:16.5px;background:#262626"></div>
<div class="a " style="left:835.59px;top:127.5px;width:1.2px;height:16.5px;background:#262626"></div>
<div class="a " style="left:852.62px;top:127.5px;width:1.2px;height:16.5px;background:#262626"></div>
<div class="a " style="left:869.65px;top:127.5px;width:1.2px;height:16.5px;background:#262626"></div>
<div class="a " style="left:886.6800000000001px;top:127.5px;width:1.2px;height:16.5px;background:#262626"></div>
<div class="a " style="left:903.71px;top:127.5px;width:1.2px;height:16.5px;background:#262626"></div>
<div class="a " style="left:920.74px;top:127.5px;width:1.2px;height:16.5px;background:#262626"></div>
<div class="a " style="left:937.77px;top:127.5px;width:1.2px;height:16.5px;background:#262626"></div>
<svg class="a" style="left:786.515px;top:129px" width="13" height="13"><rect x="0.5" y="3.5" width="12" height="8.5" rx="1" fill="#222"/><rect x="2" y="4.3" width="10" height="3" fill="#dcdcdc"/><rect x="2.5" y="2.5" width="3" height="1.5" fill="#ccc" stroke="#222" stroke-width="0.5"/><rect x="2.5" y="5" width="1.5" height="1" fill="#e03030"/><circle cx="7" cy="8" r="3" fill="#e8e8e8" stroke="#222" stroke-width="0.6"/><circle cx="7" cy="8" r="2" fill="#5a3040"/><circle cx="7.5" cy="8.5" r="1.1" fill="#b02020"/><circle cx="6.3" cy="7.3" r="0.6" fill="#6080c0"/></svg>
<svg class="a" style="left:803.545px;top:129px" width="13" height="13"><rect x="3" y="4" width="8" height="7" fill="#ccc" stroke="#333" stroke-width="0.5" transform="rotate(12 7 8)"/><rect x="1" y="1.5" width="8" height="8" fill="#ddd" stroke="#333" stroke-width="0.6"/><rect x="4.5" y="2.5" width="3" height="5" rx="1" fill="#5a86d0"/><rect x="1.5" y="1.5" width="2" height="2" fill="#f0e050"/></svg>
<svg class="a" style="left:820.575px;top:129px" width="13" height="13"><circle cx="3" cy="2.5" r="1.8" fill="#c8c860" opacity="0.8"/><circle cx="5" cy="10" r="3" fill="#bbb" stroke="#222" stroke-width="0.6"/><rect x="7.5" y="2" width="4" height="7" rx="1.5" fill="#5a86d0" stroke="#222" stroke-width="0.6"/></svg>
<svg class="a" style="left:837.605px;top:129px" width="13" height="13"><circle cx="6.5" cy="6.5" r="5.5" fill="#4a82c8" stroke="#222" stroke-width="0.6"/><path d="M3 4 Q5 2.5 6 4.5 Q5 6 3.5 6Z M7.5 6 Q10 5 10.5 7.5 Q9 9.5 7.5 8Z" fill="#4a8a40"/></svg>
<svg class="a" style="left:854.635px;top:129px" width="13" height="13"><path d="M6.5 1 L12 3.5 L12 9.5 L6.5 12 L1 9.5 L1 3.5Z" fill="#c08850" stroke="#333" stroke-width="0.6"/><path d="M1 3.5 L6.5 6 L12 3.5 M6.5 6 V12" stroke="#7a5028" stroke-width="0.6" fill="none"/><path d="M6.5 1 L12 3.5 L6.5 6 L1 3.5Z" fill="#e0b080"/></svg>
<svg class="a" style="left:871.665px;top:129px" width="13" height="13"><path d="M4 9 L9 4" stroke="#ddd" stroke-width="1.2"/><rect x="0.8" y="6" width="6" height="3.6" rx="1.8" transform="rotate(-45 3.8 7.8)" fill="none" stroke="#ddd" stroke-width="1.2"/><rect x="6.2" y="3.2" width="6" height="3.6" rx="1.8" transform="rotate(-45 9.2 5)" fill="none" stroke="#ddd" stroke-width="1.2"/></svg>
<svg class="a" style="left:888.695px;top:129px" width="13" height="13"><circle cx="6.5" cy="2" r="1.2" fill="#ddd"/><path d="M1 4.5 H12 M6.5 3.5 V8 L4 12.5 M6.5 8 L9 12.5" stroke="#ddd" stroke-width="1" fill="none"/></svg>
<svg class="a" style="left:905.725px;top:129px" width="13" height="13"><path d="M3.5 9.5 L9.5 3.5" stroke="#ccc" stroke-width="2.4" stroke-linecap="round"/><circle cx="3" cy="9" r="1.6" fill="#ccc"/><circle cx="4" cy="10.5" r="1.6" fill="#ccc"/><circle cx="9" cy="3" r="1.6" fill="#ccc"/><circle cx="10.5" cy="4" r="1.6" fill="#ccc"/></svg>
<svg class="a" style="left:922.755px;top:129px" width="13" height="13"><rect x="1.5" y="1.5" width="10" height="10" fill="#eee" stroke="#333" stroke-width="0.6"/><g fill="#9a2020"><rect x="1.5" y="1.5" width="2.5" height="2.5"/><rect x="6.5" y="1.5" width="2.5" height="2.5"/><rect x="4" y="4" width="2.5" height="2.5"/><rect x="9" y="4" width="2.5" height="2.5"/><rect x="1.5" y="6.5" width="2.5" height="2.5"/><rect x="6.5" y="6.5" width="2.5" height="2.5"/><rect x="4" y="9" width="2.5" height="2.5"/><rect x="9" y="9" width="2.5" height="2.5"/></g></svg>
<svg class="a" style="left:939.785px;top:129px" width="13" height="13"><path d="M1.5 6 L5 11 L10 4" stroke="#5a7ab0" stroke-width="2.2" fill="none"/><circle cx="9.5" cy="3.5" r="2.6" fill="#ccc" stroke="#444" stroke-width="0.5"/></svg>
<svg class="a" style="left:1013px;top:124px" width="11" height="11"><path d="M2.3 0 L11 8.7 M5.8 0 L11 5.2 M9.3 0 L11 1.7" stroke="#4a4a4a" stroke-width="0.9"/><path d="M1 0 L11 10 M4.5 0 L11 6.5 M8 0 L11 3" stroke="#b4b4b4" stroke-width="0.9"/></svg>
<div class="a " style="left:744px;top:146.5px;width:280px;height:1px;background:#686868"></div>
<div class="a " style="left:1009.5px;top:152px;width:11px;height:461px;background:#5e5e5e;border-radius:5.5px"></div>
<div class="a " style="left:1009.5px;top:151px;width:11px;height:325px;background:linear-gradient(90deg,#686868,#7e7e7e 60%,#727272);border:1px solid #5e5e5e;border-radius:5.5px"></div>
<svg class="a" style="left:751.5px;top:154.5px" width="15" height="15"><path d="M1.2 13.8 L6 9" stroke="#222" stroke-width="2.4" stroke-linecap="round"/><path d="M1.5 13.5 L6 9" stroke="#ddd" stroke-width="1.1"/><path d="M4 7.2 L7.8 11 L9 8.6 L12 5.8 L13.2 6.2 L13.8 5.6 L9.4 1.2 L8.8 1.8 L9.2 3 L6.4 6Z" fill="#e4e4e4" stroke="#222" stroke-width="0.8" stroke-linejoin="round"/></svg>
<svg class="a" style="left:771.5px;top:154.5px" width="14" height="15"><circle cx="2.8" cy="2.8" r="2.2" fill="#e8e070" opacity="0.7"/><circle cx="2.8" cy="2.8" r="1.1" fill="#fffbc0"/><rect x="7" y="2" width="5.5" height="9" rx="2" fill="#4a7ad0" stroke="#1a1a1a" stroke-width="0.8"/><rect x="8" y="3" width="1.8" height="6.5" rx="0.9" fill="#d8e4f8"/><circle cx="5" cy="10.5" r="3.3" fill="#dcdcdc" stroke="#1a1a1a" stroke-width="0.8"/><circle cx="4.3" cy="9.8" r="1.3" fill="#fafafa"/></svg>
<div class="a t " style="left:787px;top:158.30px;font-size:9.6px;color:#111;">Scene</div>
<div class="a " style="left:748px;top:176px;width:257px;height:1px;background:#555555"></div>
<div class="a " style="left:748px;top:177px;width:257px;height:1px;background:#7e7e7e"></div>
<svg class="a" style="left:754.5px;top:184.7px" width="8" height="8"><path d="M0.3 0.3 L7.5 0.3 L3.9 7.3Z" fill="#111"/></svg>
<div class="a t " style="left:764.7px;top:182.30px;font-size:10.6px;color:#111;">Render</div>
<svg class="a" style="left:991.5px;top:186px" width="10" height="6"><g fill="#4a4a4a"><rect x="0" y="1" width="1.2" height="1"/><rect x="3" y="1" width="1.2" height="1"/><rect x="6" y="1" width="1.2" height="1"/><rect x="9" y="1" width="1" height="1"/><rect x="0" y="4" width="1.2" height="1"/><rect x="3" y="4" width="1.2" height="1"/><rect x="6" y="4" width="1.2" height="1"/><rect x="9" y="4" width="1" height="1"/></g><g fill="#9a9a9a"><rect x="0" y="2" width="1.2" height="1"/><rect x="3" y="2" width="1.2" height="1"/><rect x="6" y="2" width="1.2" height="1"/><rect x="9" y="2" width="1" height="1"/><rect x="0" y="5" width="1.2" height="1"/><rect x="3" y="5" width="1.2" height="1"/><rect x="6" y="5" width="1.2" height="1"/><rect x="9" y="5" width="1" height="1"/></g></svg>
<div class="a " style="left:750.5px;top:205.5px;width:84.5px;height:16.5px;background:linear-gradient(#a8a8a8,#929292);border:1px solid #353535;border-radius:4px 0 0 4px"></div>
<div class="a " style="left:834px;top:205.5px;width:85px;height:16.5px;background:linear-gradient(#a8a8a8,#929292);border:1px solid #353535;border-radius:0"></div>
<div class="a " style="left:918px;top:205.5px;width:84.5px;height:16.5px;background:linear-gradient(#a8a8a8,#929292);border:1px solid #353535;border-radius:0 4px 4px 0"></div>
<svg class="a" style="left:753.5px;top:206.5px" width="15" height="14"><rect x="1" y="3.5" width="12" height="8.5" rx="1" fill="#222"/><rect x="2" y="4.3" width="10" height="3" fill="#dcdcdc"/><rect x="2.5" y="2.5" width="3" height="1.5" fill="#ccc" stroke="#222" stroke-width="0.5"/><rect x="2.5" y="5" width="1.5" height="1" fill="#e03030"/><circle cx="7" cy="8" r="3" fill="#e8e8e8" stroke="#222" stroke-width="0.6"/><circle cx="7" cy="8" r="2" fill="#5a3040"/><circle cx="7.5" cy="8.5" r="1.1" fill="#b02020"/><circle cx="6.3" cy="7.3" r="0.6" fill="#6080c0"/><circle cx="11" cy="2.7" r="2.6" fill="#d8c030"/><circle cx="11" cy="2.7" r="1.2" fill="#fff8c0"/></svg>
<svg class="a" style="left:837px;top:206.5px" width="14" height="14"><rect x="1" y="6.2" width="12" height="7" fill="#1e1e1e"/><path d="M2 7.3H12M2 8.3H12" stroke="#eee" stroke-width="0.8" stroke-dasharray="1.8 1.4"/><path d="M1 5.2 L12.5 1.5 L13 3.3 L1.5 7Z" fill="#1e1e1e"/><path d="M2.5 5 L11.8 2.2" stroke="#eee" stroke-width="0.9" stroke-dasharray="1.8 1.4"/><rect x="0.3" y="3.2" width="2.6" height="5" rx="1.2" fill="#5a8ad8" stroke="#1e2e60" stroke-width="0.5"/><path d="M6 11 L8 10 L10 11" stroke="#777" stroke-width="0.6" fill="none"/></svg>
<svg class="a" style="left:920.5px;top:206.5px" width="14" height="14"><path d="M1 4.5 H3.8 L7.3 1.3 V12.7 L3.8 9.5 H1Z" fill="#e6e6e6" stroke="#151515" stroke-width="0.9" stroke-linejoin="round"/><path d="M8.8 4 Q10.2 7 8.8 10 M10.6 2.6 Q12.8 7 10.6 11.4" stroke="#8aa6d8" stroke-width="1.3" fill="none"/></svg>
<div class="a t" style="left:840px;top:209.80px;width:85px;text-align:center;font-size:9.6px;color:#111;">Animation</div>
<div class="a t" style="left:757px;top:209.80px;width:84.5px;text-align:center;font-size:9.6px;color:#111;">Render</div>
<div class="a t" style="left:924.5px;top:209.80px;width:84.5px;text-align:center;font-size:9.6px;color:#111;">Audio</div>
<div class="a t " style="left:756.7px;top:231.80px;font-size:9.5px;color:#111;">Display:</div>
<div class="a " style="left:838.5px;top:227.5px;width:147px;height:16.5px;background:linear-gradient(#4d4d4d,#3b3b3b);border:1px solid #262626;border-radius:3px"></div>
<div class="a t " style="left:845px;top:231.80px;font-size:9.5px;color:#fff;-webkit-text-stroke:0.08px;">Image Editor</div>
<svg class="a" style="left:975.5px;top:230px" width="6" height="12"><path d="M3 0.5 L5.7 4.8 L0.3 4.8Z M3 11.5 L5.7 7.2 L0.3 7.2Z" fill="#c4c4c4"/></svg>
<div class="a " style="left:984px;top:227.5px;width:18.5px;height:16.5px;background:linear-gradient(#a8a8a8,#929292);border:1px solid #353535;border-radius:0 3px 3px 0"></div>
<svg class="a" style="left:986.5px;top:228.5px" width="14" height="14"><path d="M4.2 7.5 V4.8 A2.4 2.4 0 0 0 -0.6 4.8" stroke="#1a1a1a" stroke-width="2.6" fill="none" transform="translate(2.5 0)"/><path d="M4.2 7.5 V4.8 A2.4 2.4 0 0 0 -0.6 4.8" stroke="#e8e8e8" stroke-width="1.1" fill="none" transform="translate(2.5 0)"/><rect x="5" y="7.2" width="8" height="6" fill="#ececec" stroke="#1a1a1a" stroke-width="0.9"/><circle cx="9" cy="10.2" r="0.7" fill="#222"/></svg>
<div class="a " style="left:748px;top:249.3px;width:257px;height:1px;background:#555555"></div>
<div class="a " style="left:748px;top:250.3px;width:257px;height:1px;background:#7e7e7e"></div>
<svg class="a" style="left:754.5px;top:257.0px" width="8" height="8"><path d="M0.3 0.3 L7.5 0.3 L3.9 7.3Z" fill="#111"/></svg>
<div class="a t " style="left:764.7px;top:254.60px;font-size:10.6px;color:#111;">Dimensions</div>
<svg class="a" style="left:991.5px;top:258.3px" width="10" height="6"><g fill="#4a4a4a"><rect x="0" y="1" width="1.2" height="1"/><rect x="3" y="1" width="1.2" height="1"/><rect x="6" y="1" width="1.2" height="1"/><rect x="9" y="1" width="1" height="1"/><rect x="0" y="4" width="1.2" height="1"/><rect x="3" y="4" width="1.2" height="1"/><rect x="6" y="4" width="1.2" height="1"/><rect x="9" y="4" width="1" height="1"/></g><g fill="#9a9a9a"><rect x="0" y="2" width="1.2" height="1"/><rect x="3" y="2" width="1.2" height="1"/><rect x="6" y="2" width="1.2" height="1"/><rect x="9" y="2" width="1" height="1"/><rect x="0" y="5" width="1.2" height="1"/><rect x="3" y="5" width="1.2" height="1"/><rect x="6" y="5" width="1.2" height="1"/><rect x="9" y="5" width="1" height="1"/></g></svg>
<div class="a " style="left:750px;top:278.4px;width:218.5px;height:16.5px;background:linear-gradient(#4d4d4d,#3b3b3b);border:1px solid #262626;border-radius:3px"></div>
<div class="a t " style="left:756.6px;top:282.70px;font-size:9.5px;color:#fff;-webkit-text-stroke:0.08px;">Render Presets</div>
<svg class="a" style="left:959px;top:281px" width="6" height="12"><path d="M3 0.5 L5.7 4.8 L0.3 4.8Z M3 11.5 L5.7 7.2 L0.3 7.2Z" fill="#c4c4c4"/></svg>
<div class="a " style="left:968px;top:278.5px;width:17px;height:16.5px;background:linear-gradient(#a8a8a8,#929292);border:1px solid #353535;border-radius:0"></div>
<div class="a " style="left:984.5px;top:278.5px;width:18px;height:16.5px;background:linear-gradient(#a8a8a8,#929292);border:1px solid #353535;border-radius:0 3px 3px 0"></div>
<svg class="a" style="left:970.5px;top:281px" width="12" height="12"><path d="M6 1V11M1 6H11" stroke="#3a3a3a" stroke-width="3"/><path d="M6 1.6V10.4M1.6 6H10.4" stroke="#f4f4f4" stroke-width="1.6"/></svg>
<svg class="a" style="left:987.5px;top:281px" width="12" height="12"><path d="M1 6H11" stroke="#3a3a3a" stroke-width="3"/><path d="M1.6 6H10.4" stroke="#f4f4f4" stroke-width="1.6"/></svg>
<div class="a t " style="left:756.7px;top:305.30px;font-size:9.5px;color:#111;">Resolution:</div>
<div class="a t " style="left:887px;top:305.30px;font-size:9.5px;color:#111;">Frame Range:</div>
<div class="a " style="left:750.5px;top:317px;width:122.5px;height:17.5px;background:linear-gradient(#b9b9b9,#a9a9a9);border:1px solid #353535;border-radius:8px;border-radius:8px 8px 0 0"></div>
<svg class="a" style="left:755.5px;top:322.75px" width="4" height="6"><path d="M4 0 L0 3 L4 6Z" fill="#7a7a7a"/></svg>
<svg class="a" style="left:864.0px;top:322.75px" width="4" height="6"><path d="M0 0 L4 3 L0 6Z" fill="#7a7a7a"/></svg>
<div class="a t " style="left:763.5px;top:321.30px;font-size:9.5px;color:#111;">X:</div>
<div class="a t" style="left:750.5px;top:321.30px;width:108.35px;text-align:right;font-size:9.5px;color:#111;letter-spacing:0.35px">1920 px</div>
<div class="a " style="left:750.5px;top:333.5px;width:122.5px;height:17.5px;background:linear-gradient(#b9b9b9,#a9a9a9);border:1px solid #353535;border-radius:8px;border-radius:0"></div>
<svg class="a" style="left:755.5px;top:339.25px" width="4" height="6"><path d="M4 0 L0 3 L4 6Z" fill="#7a7a7a"/></svg>
<svg class="a" style="left:864.0px;top:339.25px" width="4" height="6"><path d="M0 0 L4 3 L0 6Z" fill="#7a7a7a"/></svg>
<div class="a t " style="left:763.5px;top:337.80px;font-size:9.5px;color:#111;">Y:</div>
<div class="a t" style="left:750.5px;top:337.80px;width:108.35px;text-align:right;font-size:9.5px;color:#111;letter-spacing:0.35px">1080 px</div>
<div class="a " style="left:750.5px;top:350px;width:122.5px;height:17.5px;background:linear-gradient(#b9b9b9,#a9a9a9);border:1px solid #353535;border-radius:0 0 8px 8px"></div>
<div class="a " style="left:751.5px;top:351px;width:63px;height:15.5px;background:linear-gradient(#7a7a7a,#808080);border-radius:0 0 0 7px"></div>
<div class="a t" style="left:750.5px;top:354.8px;width:108px;text-align:right;font-size:9.5px;color:#111">50%</div>
<div class="a " style="left:880px;top:317px;width:122.5px;height:17.5px;background:linear-gradient(#b9b9b9,#a9a9a9);border:1px solid #353535;border-radius:8px;border-radius:8px 8px 0 0"></div>
<svg class="a" style="left:885px;top:322.75px" width="4" height="6"><path d="M4 0 L0 3 L4 6Z" fill="#7a7a7a"/></svg>
<svg class="a" style="left:993.5px;top:322.75px" width="4" height="6"><path d="M0 0 L4 3 L0 6Z" fill="#7a7a7a"/></svg>
<div class="a t " style="left:893px;top:321.30px;font-size:9.5px;color:#111;">Start Frame:</div>
<div class="a t" style="left:880px;top:321.30px;width:108.35px;text-align:right;font-size:9.5px;color:#111;letter-spacing:0.35px">1</div>
<div class="a " style="left:880px;top:333.5px;width:122.5px;height:17.5px;background:linear-gradient(#b9b9b9,#a9a9a9);border:1px solid #353535;border-radius:8px;border-radius:0"></div>
<svg class="a" style="left:885px;top:339.25px" width="4" height="6"><path d="M4 0 L0 3 L4 6Z" fill="#7a7a7a"/></svg>
<svg class="a" style="left:993.5px;top:339.25px" width="4" height="6"><path d="M0 0 L4 3 L0 6Z" fill="#7a7a7a"/></svg>
<div class="a t " style="left:893px;top:337.80px;font-size:9.5px;color:#111;">End Frame:</div>
<div class="a t" style="left:880px;top:337.80px;width:108.35px;text-align:right;font-size:9.5px;color:#111;letter-spacing:0.35px">250</div>
<div class="a " style="left:880px;top:350px;width:122.5px;height:17.5px;background:linear-gradient(#b9b9b9,#a9a9a9);border:1px solid #353535;border-radius:8px;border-radius:0 0 8px 8px"></div>
<svg class="a" style="left:885px;top:355.75px" width="4" height="6"><path d="M4 0 L0 3 L4 6Z" fill="#7a7a7a"/></svg>
<svg class="a" style="left:993.5px;top:355.75px" width="4" height="6"><path d="M0 0 L4 3 L0 6Z" fill="#7a7a7a"/></svg>
<div class="a t " style="left:893px;top:354.30px;font-size:9.5px;color:#111;">Frame Step:</div>
<div class="a t" style="left:880px;top:354.30px;width:108.35px;text-align:right;font-size:9.5px;color:#111;letter-spacing:0.35px">1</div>
<div class="a t " style="left:756.7px;top:373.80px;font-size:9.5px;color:#111;">Aspect Ratio:</div>
<div class="a t " style="left:887px;top:373.80px;font-size:9.5px;color:#111;">Frame Rate:</div>
<div class="a " style="left:750.5px;top:385.5px;width:122.5px;height:17.5px;background:linear-gradient(#b9b9b9,#a9a9a9);border:1px solid #353535;border-radius:8px;border-radius:8px 8px 0 0"></div>
<svg class="a" style="left:755.5px;top:391.25px" width="4" height="6"><path d="M4 0 L0 3 L4 6Z" fill="#7a7a7a"/></svg>
<svg class="a" style="left:864.0px;top:391.25px" width="4" height="6"><path d="M0 0 L4 3 L0 6Z" fill="#7a7a7a"/></svg>
<div class="a t " style="left:763.5px;top:389.80px;font-size:9.5px;color:#111;">X:</div>
<div class="a t" style="left:750.5px;top:389.80px;width:108.35px;text-align:right;font-size:9.5px;color:#111;letter-spacing:0.35px">1.000</div>
<div class="a " style="left:750.5px;top:402px;width:122.5px;height:17.5px;background:linear-gradient(#b9b9b9,#a9a9a9);border:1px solid #353535;border-radius:8px;border-radius:0 0 8px 8px"></div>
<svg class="a" style="left:755.5px;top:407.75px" width="4" height="6"><path d="M4 0 L0 3 L4 6Z" fill="#7a7a7a"/></svg>
<svg class="a" style="left:864.0px;top:407.75px" width="4" height="6"><path d="M0 0 L4 3 L0 6Z" fill="#7a7a7a"/></svg>
<div class="a t " style="left:763.5px;top:406.30px;font-size:9.5px;color:#111;">Y:</div>
<div class="a t" style="left:750.5px;top:406.30px;width:108.35px;text-align:right;font-size:9.5px;color:#111;letter-spacing:0.35px">1.000</div>
<div class="a " style="left:880px;top:385.5px;width:122.5px;height:17px;background:linear-gradient(#4d4d4d,#3b3b3b);border:1px solid #262626;border-radius:3px"></div>
<div class="a t " style="left:887px;top:390.05px;font-size:9.5px;color:#fff;-webkit-text-stroke:0.08px;">24 fps</div>
<svg class="a" style="left:994.0px;top:388.0px" width="6" height="12"><path d="M3 0.5 L5.7 4.8 L0.3 4.8Z M3 11.5 L5.7 7.2 L0.3 7.2Z" fill="#c4c4c4"/></svg>
<div class="a t " style="left:887px;top:408.30px;font-size:9.5px;color:#111;">Time Remapping:</div>
<div class="a " style="left:880px;top:420.5px;width:61px;height:16.5px;background:linear-gradient(#b9b9b9,#a9a9a9);border:1px solid #353535;border-radius:8px;border-radius:8px 0 0 8px"></div>
<svg class="a" style="left:885px;top:425.75px" width="4" height="6"><path d="M4 0 L0 3 L4 6Z" fill="#7a7a7a"/></svg>
<svg class="a" style="left:932px;top:425.75px" width="4" height="6"><path d="M0 0 L4 3 L0 6Z" fill="#7a7a7a"/></svg>
<div class="a t " style="left:893px;top:424.30px;font-size:9.5px;color:#111;"></div>
<div class="a t" style="left:880px;top:424.30px;width:46.85px;text-align:right;font-size:9.5px;color:#111;letter-spacing:0.35px"></div>
<div class="a " style="left:940px;top:420.5px;width:62.5px;height:16.5px;background:linear-gradient(#b9b9b9,#a9a9a9);border:1px solid #353535;border-radius:8px;border-radius:0 8px 8px 0"></div>
<svg class="a" style="left:945px;top:425.75px" width="4" height="6"><path d="M4 0 L0 3 L4 6Z" fill="#7a7a7a"/></svg>
<svg class="a" style="left:993.5px;top:425.75px" width="4" height="6"><path d="M0 0 L4 3 L0 6Z" fill="#7a7a7a"/></svg>
<div class="a t " style="left:953px;top:424.30px;font-size:9.5px;color:#111;"></div>
<div class="a t" style="left:940px;top:424.30px;width:48.35px;text-align:right;font-size:9.5px;color:#111;letter-spacing:0.35px"></div>
<div class="a t" style="left:880px;top:424.80px;width:61px;text-align:center;font-size:9.5px;color:#111;">Ol: 100</div>
<div class="a t" style="left:940px;top:424.80px;width:62.5px;text-align:center;font-size:9.5px;color:#111;">Ne: 100</div>
<div class="a " style="left:753px;top:424.5px;width:12px;height:12px;background:linear-gradient(#3e3e3e,#4e4e4e);border:1px solid #2a2a2a;border-radius:3px"></div>
<div class="a t " style="left:771.4px;top:426.80px;font-size:9.5px;color:#111;">Border</div>
<div class="a" style="left:817px;top:424.5px;width:12px;height:12px;border-radius:3px;background:#6a6a6a;border:1px solid #5a5a5a"></div>
<div class="a t " style="left:835.8px;top:426.80px;font-size:9.5px;color:#4e4e4e;">Crop</div>
<div class="a " style="left:748px;top:444.5px;width:257px;height:1px;background:#555555"></div>
<div class="a " style="left:748px;top:445.5px;width:257px;height:1px;background:#7e7e7e"></div>
<svg class="a" style="left:754.5px;top:452.0px" width="8" height="8"><path d="M0.3 0.3 L7.5 0.3 L3.9 7.3Z" fill="#111"/></svg>
<div class="a " style="left:764.8px;top:449.3px;width:12px;height:12px;background:linear-gradient(#3e3e3e,#4e4e4e);border:1px solid #2a2a2a;border-radius:3px"></div>
<svg class="a" style="left:765.8px;top:448.3px" width="12" height="12"><path d="M2.3 6.3 L4.9 8.9 L10.2 2.2" stroke="#d8d8d8" stroke-width="1.4" fill="none" stroke-linecap="round" stroke-linejoin="round"/></svg>
<div class="a t " style="left:782.8000000000001px;top:449.60px;font-size:10.6px;color:#111;">Anti-Aliasing</div>
<svg class="a" style="left:991.5px;top:453.3px" width="10" height="6"><g fill="#4a4a4a"><rect x="0" y="1" width="1.2" height="1"/><rect x="3" y="1" width="1.2" height="1"/><rect x="6" y="1" width="1.2" height="1"/><rect x="9" y="1" width="1" height="1"/><rect x="0" y="4" width="1.2" height="1"/><rect x="3" y="4" width="1.2" height="1"/><rect x="6" y="4" width="1.2" height="1"/><rect x="9" y="4" width="1" height="1"/></g><g fill="#9a9a9a"><rect x="0" y="2" width="1.2" height="1"/><rect x="3" y="2" width="1.2" height="1"/><rect x="6" y="2" width="1.2" height="1"/><rect x="9" y="2" width="1" height="1"/><rect x="0" y="5" width="1.2" height="1"/><rect x="3" y="5" width="1.2" height="1"/><rect x="6" y="5" width="1.2" height="1"/><rect x="9" y="5" width="1" height="1"/></g></svg>
<div class="a " style="left:750.5px;top:473px;width:122.5px;height:16.5px;background:linear-gradient(#4d4d4d,#3b3b3b);border:1px solid #262626;border-radius:4px"></div>
<div class="a " style="left:780px;top:473px;width:30.5px;height:16.5px;background:linear-gradient(#6a9ae0,#5282cc);border:1px solid #262626"></div>
<div class="a " style="left:840px;top:473px;width:1px;height:16.5px;background:#262626"></div>
<div class="a t" style="left:750.5px;top:477.80px;width:29.5px;text-align:center;font-size:9.6px;color:#fff;-webkit-text-stroke:0.08px;">5</div>
<div class="a t" style="left:780px;top:477.80px;width:30px;text-align:center;font-size:9.6px;color:#111;">8</div>
<div class="a t" style="left:810px;top:477.80px;width:30px;text-align:center;font-size:9.6px;color:#fff;-webkit-text-stroke:0.08px;">11</div>
<div class="a t" style="left:840px;top:477.80px;width:33px;text-align:center;font-size:9.6px;color:#fff;-webkit-text-stroke:0.08px;">16</div>
<div class="a " style="left:880px;top:473px;width:122.5px;height:16.5px;background:linear-gradient(#4d4d4d,#3b3b3b);border:1px solid #262626;border-radius:3px"></div>
<div class="a t " style="left:887px;top:477.30px;font-size:9.5px;color:#fff;-webkit-text-stroke:0.08px;">Mitchell-Netravali</div>
<svg class="a" style="left:994.0px;top:475.25px" width="6" height="12"><path d="M3 0.5 L5.7 4.8 L0.3 4.8Z M3 11.5 L5.7 7.2 L0.3 7.2Z" fill="#c4c4c4"/></svg>
<div class="a " style="left:753px;top:494.5px;width:12px;height:12px;background:linear-gradient(#3e3e3e,#4e4e4e);border:1px solid #2a2a2a;border-radius:3px"></div>
<div class="a t " style="left:771.4px;top:496.30px;font-size:9.5px;color:#111;">Full Sample</div>
<div class="a " style="left:880px;top:492.5px;width:122.5px;height:16.5px;background:linear-gradient(#b9b9b9,#a9a9a9);border:1px solid #353535;border-radius:8px;"></div>
<svg class="a" style="left:885px;top:497.75px" width="4" height="6"><path d="M4 0 L0 3 L4 6Z" fill="#7a7a7a"/></svg>
<svg class="a" style="left:993.5px;top:497.75px" width="4" height="6"><path d="M0 0 L4 3 L0 6Z" fill="#7a7a7a"/></svg>
<div class="a t " style="left:893px;top:496.30px;font-size:9.5px;color:#111;">Size:</div>
<div class="a t" style="left:880px;top:496.30px;width:108.35px;text-align:right;font-size:9.5px;color:#111;letter-spacing:0.35px">1.000 px</div>
<div class="a " style="left:748px;top:515px;width:257px;height:1px;background:#555555"></div>
<div class="a " style="left:748px;top:516px;width:257px;height:1px;background:#7e7e7e"></div>
<svg class="a" style="left:754.3px;top:522.3px" width="8" height="8"><path d="M0.3 0.3 L6.9 3.85 L0.3 7.4Z" fill="#151515"/></svg>
<div class="a " style="left:764.8px;top:519.8px;width:12px;height:12px;background:linear-gradient(#3e3e3e,#4e4e4e);border:1px solid #2a2a2a;border-radius:3px"></div>
<div class="a t " style="left:782.8000000000001px;top:520.10px;font-size:10.6px;color:#111;">Sampled Motion Blur</div>
<svg class="a" style="left:991.5px;top:523.8px" width="10" height="6"><g fill="#4a4a4a"><rect x="0" y="1" width="1.2" height="1"/><rect x="3" y="1" width="1.2" height="1"/><rect x="6" y="1" width="1.2" height="1"/><rect x="9" y="1" width="1" height="1"/><rect x="0" y="4" width="1.2" height="1"/><rect x="3" y="4" width="1.2" height="1"/><rect x="6" y="4" width="1.2" height="1"/><rect x="9" y="4" width="1" height="1"/></g><g fill="#9a9a9a"><rect x="0" y="2" width="1.2" height="1"/><rect x="3" y="2" width="1.2" height="1"/><rect x="6" y="2" width="1.2" height="1"/><rect x="9" y="2" width="1" height="1"/><rect x="0" y="5" width="1.2" height="1"/><rect x="3" y="5" width="1.2" height="1"/><rect x="6" y="5" width="1.2" height="1"/><rect x="9" y="5" width="1" height="1"/></g></svg>
<div class="a " style="left:748px;top:535px;width:257px;height:1px;background:#555555"></div>
<div class="a " style="left:748px;top:536px;width:257px;height:1px;background:#7e7e7e"></div>
<svg class="a" style="left:754.3px;top:542.7px" width="8" height="8"><path d="M0.3 0.3 L6.9 3.85 L0.3 7.4Z" fill="#151515"/></svg>
<div class="a t " style="left:764.7px;top:540.50px;font-size:10.6px;color:#111;">Shading</div>
<svg class="a" style="left:991.5px;top:544.2px" width="10" height="6"><g fill="#4a4a4a"><rect x="0" y="1" width="1.2" height="1"/><rect x="3" y="1" width="1.2" height="1"/><rect x="6" y="1" width="1.2" height="1"/><rect x="9" y="1" width="1" height="1"/><rect x="0" y="4" width="1.2" height="1"/><rect x="3" y="4" width="1.2" height="1"/><rect x="6" y="4" width="1.2" height="1"/><rect x="9" y="4" width="1" height="1"/></g><g fill="#9a9a9a"><rect x="0" y="2" width="1.2" height="1"/><rect x="3" y="2" width="1.2" height="1"/><rect x="6" y="2" width="1.2" height="1"/><rect x="9" y="2" width="1" height="1"/><rect x="0" y="5" width="1.2" height="1"/><rect x="3" y="5" width="1.2" height="1"/><rect x="6" y="5" width="1.2" height="1"/><rect x="9" y="5" width="1" height="1"/></g></svg>
<div class="a " style="left:748px;top:556px;width:257px;height:1px;background:#555555"></div>
<div class="a " style="left:748px;top:557px;width:257px;height:1px;background:#7e7e7e"></div>
<svg class="a" style="left:754.3px;top:563.5px" width="8" height="8"><path d="M0.3 0.3 L6.9 3.85 L0.3 7.4Z" fill="#151515"/></svg>
<div class="a t " style="left:764.7px;top:561.30px;font-size:10.6px;color:#111;">Performance</div>
<svg class="a" style="left:991.5px;top:565px" width="10" height="6"><g fill="#4a4a4a"><rect x="0" y="1" width="1.2" height="1"/><rect x="3" y="1" width="1.2" height="1"/><rect x="6" y="1" width="1.2" height="1"/><rect x="9" y="1" width="1" height="1"/><rect x="0" y="4" width="1.2" height="1"/><rect x="3" y="4" width="1.2" height="1"/><rect x="6" y="4" width="1.2" height="1"/><rect x="9" y="4" width="1" height="1"/></g><g fill="#9a9a9a"><rect x="0" y="2" width="1.2" height="1"/><rect x="3" y="2" width="1.2" height="1"/><rect x="6" y="2" width="1.2" height="1"/><rect x="9" y="2" width="1" height="1"/><rect x="0" y="5" width="1.2" height="1"/><rect x="3" y="5" width="1.2" height="1"/><rect x="6" y="5" width="1.2" height="1"/><rect x="9" y="5" width="1" height="1"/></g></svg>
<div class="a " style="left:748px;top:576.5px;width:257px;height:1px;background:#555555"></div>
<div class="a " style="left:748px;top:577.5px;width:257px;height:1px;background:#7e7e7e"></div>
<svg class="a" style="left:754.3px;top:584.8px" width="8" height="8"><path d="M0.3 0.3 L6.9 3.85 L0.3 7.4Z" fill="#151515"/></svg>
<div class="a t " style="left:764.7px;top:582.60px;font-size:10.6px;color:#111;">Post Processing</div>
<svg class="a" style="left:991.5px;top:586.3px" width="10" height="6"><g fill="#4a4a4a"><rect x="0" y="1" width="1.2" height="1"/><rect x="3" y="1" width="1.2" height="1"/><rect x="6" y="1" width="1.2" height="1"/><rect x="9" y="1" width="1" height="1"/><rect x="0" y="4" width="1.2" height="1"/><rect x="3" y="4" width="1.2" height="1"/><rect x="6" y="4" width="1.2" height="1"/><rect x="9" y="4" width="1" height="1"/></g><g fill="#9a9a9a"><rect x="0" y="2" width="1.2" height="1"/><rect x="3" y="2" width="1.2" height="1"/><rect x="6" y="2" width="1.2" height="1"/><rect x="9" y="2" width="1" height="1"/><rect x="0" y="5" width="1.2" height="1"/><rect x="3" y="5" width="1.2" height="1"/><rect x="6" y="5" width="1.2" height="1"/><rect x="9" y="5" width="1" height="1"/></g></svg>
<div class="a " style="left:748px;top:597px;width:257px;height:1px;background:#555555"></div>
<div class="a " style="left:748px;top:598px;width:257px;height:1px;background:#7e7e7e"></div>
<svg class="a" style="left:754.3px;top:604.9px" width="8" height="8"><path d="M0.3 0.3 L6.9 3.85 L0.3 7.4Z" fill="#151515"/></svg>
<div class="a " style="left:764.8px;top:602.4px;width:12px;height:12px;background:linear-gradient(#3e3e3e,#4e4e4e);border:1px solid #2a2a2a;border-radius:3px"></div>
<div class="a t " style="left:782.8000000000001px;top:602.70px;font-size:10.6px;color:#111;">Stamp</div>
<svg class="a" style="left:991.5px;top:606.4px" width="10" height="6"><g fill="#4a4a4a"><rect x="0" y="1" width="1.2" height="1"/><rect x="3" y="1" width="1.2" height="1"/><rect x="6" y="1" width="1.2" height="1"/><rect x="9" y="1" width="1" height="1"/><rect x="0" y="4" width="1.2" height="1"/><rect x="3" y="4" width="1.2" height="1"/><rect x="6" y="4" width="1.2" height="1"/><rect x="9" y="4" width="1" height="1"/></g><g fill="#9a9a9a"><rect x="0" y="2" width="1.2" height="1"/><rect x="3" y="2" width="1.2" height="1"/><rect x="6" y="2" width="1.2" height="1"/><rect x="9" y="2" width="1" height="1"/><rect x="0" y="5" width="1.2" height="1"/><rect x="3" y="5" width="1.2" height="1"/><rect x="6" y="5" width="1.2" height="1"/><rect x="9" y="5" width="1" height="1"/></g></svg>
<svg class="a" style="left:743.5px;top:605.5px" width="11" height="11"><path d="M0 2.3 L8.7 11 M0 5.8 L5.2 11 M0 9.3 L1.7 11" stroke="#4a4a4a" stroke-width="0.9"/><path d="M0 1 L10 11 M0 4.5 L6.5 11 M0 8 L3 11" stroke="#b4b4b4" stroke-width="0.9"/></svg></body></html>
